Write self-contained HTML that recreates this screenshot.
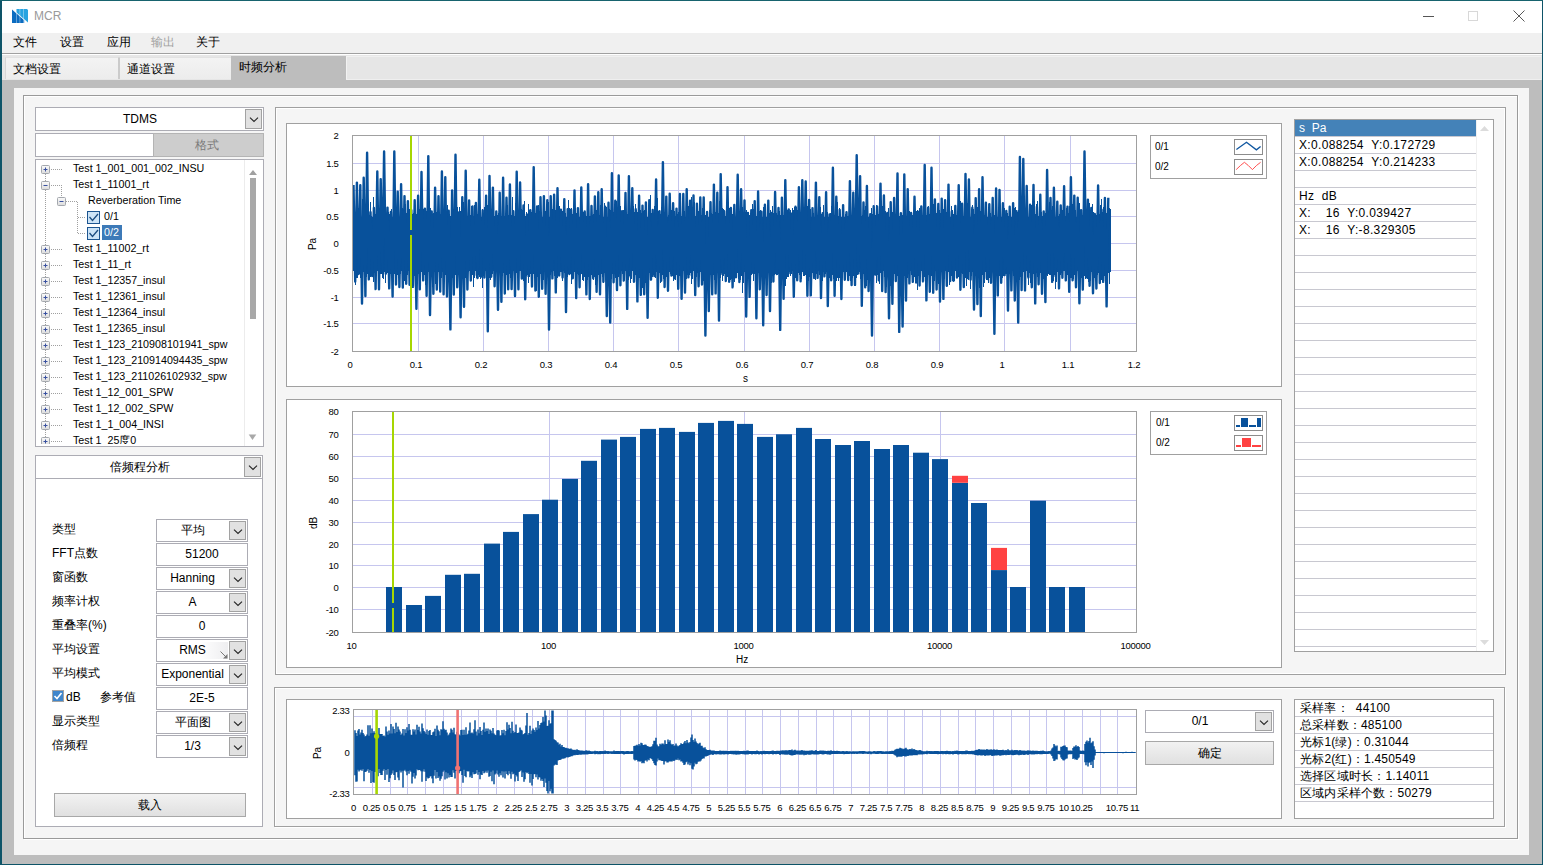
<!DOCTYPE html>
<html><head><meta charset="utf-8"><style>
html,body{margin:0;padding:0;width:1543px;height:865px;overflow:hidden;background:#0e5468;}
body{position:relative;font-family:"Liberation Sans", sans-serif;}
div{position:absolute;box-sizing:border-box;}
.t{white-space:pre;font-family:"Liberation Sans", sans-serif;}
</style></head><body>
<div class="" style="left:0px;top:0px;width:1543px;height:865px;background:#0e5468;"></div><div class="" style="left:0px;top:0px;width:1543px;height:1px;background:#17636e;"></div><div class="" style="left:2px;top:1px;width:1540px;height:863px;background:#bdbdbd;"></div><div class="" style="left:2px;top:1px;width:1540px;height:32px;background:#fff;"></div><svg style="position:absolute;left:0;top:0" width="40" height="30">
<path d="M12 9.6 L24.2 20.3 L24.2 23 L12 23 Z" fill="#0b6cc0"/>
<path d="M16.2 9 L27 9 L28 10 L28 22.6 L16.2 12.2 Z" fill="#28a3e0"/>
<rect x="16" y="9" width="0.8" height="14" fill="#fff" opacity="0.45"/>
<rect x="19.5" y="9" width="0.8" height="14" fill="#fff" opacity="0.45"/>
<rect x="23.2" y="9" width="0.8" height="14" fill="#fff" opacity="0.45"/>
</svg><div class="t" style="left:34px;top:8px;font-size:12px;color:#9a9a9a;height:16px;line-height:16px;">MCR</div><div class="" style="left:1423px;top:16px;width:11px;height:1px;background:#555;"></div><div class="" style="left:1468px;top:11px;width:10px;height:10px;border:1px solid #d8d8d8;box-sizing:border-box;"></div><svg style="position:absolute;left:1513px;top:10px" width="12" height="12"><path d="M0.5 0.5 L11.5 11.5 M11.5 0.5 L0.5 11.5" stroke="#444" stroke-width="0.9"/></svg><div class="" style="left:2px;top:33px;width:1540px;height:20px;background:#f0f0f0;"></div><div class="" style="left:2px;top:53px;width:1540px;height:1px;background:#a0a0a0;"></div><div class="t" style="left:13px;top:34px;font-size:12px;color:#000;height:16px;line-height:16px;">文件</div><div class="t" style="left:60px;top:34px;font-size:12px;color:#000;height:16px;line-height:16px;">设置</div><div class="t" style="left:107px;top:34px;font-size:12px;color:#000;height:16px;line-height:16px;">应用</div><div class="t" style="left:151px;top:34px;font-size:12px;color:#a0a0a0;height:16px;line-height:16px;">输出</div><div class="t" style="left:196px;top:34px;font-size:12px;color:#000;height:16px;line-height:16px;">关于</div><div class="" style="left:2px;top:54px;width:1540px;height:1px;background:#fff;"></div><div class="" style="left:2px;top:55px;width:1540px;height:25px;background:#e6e6e6;"></div><div class="" style="left:346px;top:56px;width:1195px;height:24px;border-left:1px solid #f2f2f2;border-top:1px solid #f0f0f0;border-bottom:1px solid #efefef;"></div><div class="" style="left:5px;top:57px;width:114px;height:22px;background:linear-gradient(#f3f3f3,#ececec);border-left:1px solid #d6d6d6;border-top:1px solid #e2e2e2;border-right:1px solid #cbcbcb;"></div><div class="" style="left:119px;top:57px;width:112px;height:22px;background:linear-gradient(#f3f3f3,#ececec);border-left:1px solid #cbcbcb;border-top:1px solid #e2e2e2;"></div><div class="" style="left:231px;top:56px;width:115px;height:24px;background:#bdbdbd;"></div><div class="t" style="left:13px;top:61px;font-size:12px;color:#000;height:16px;line-height:16px;">文档设置</div><div class="t" style="left:127px;top:61px;font-size:12px;color:#000;height:16px;line-height:16px;">通道设置</div><div class="t" style="left:239px;top:59px;font-size:12px;color:#000;height:16px;line-height:16px;">时频分析</div><div class="" style="left:14px;top:88px;width:1515px;height:767px;background:#f5f5f5;"></div><div class="" style="left:24px;top:96px;width:1495px;height:744px;border:1px solid #fff;box-sizing:border-box;"></div><div class="" style="left:23px;top:95px;width:1495px;height:744px;border:1px solid #9a9a9a;box-sizing:border-box;"></div><div class="" style="left:35px;top:107px;width:229px;height:24px;background:#fff;border:1px solid #acacb4;box-sizing:border-box;"></div><div class="" style="left:245px;top:109px;width:17px;height:20px;background:#e1e1e1;border:1px solid #a2a2a2;box-sizing:border-box;"><svg width="17" height="20" style="position:absolute;left:0;top:0"><path d="M4 7.6 L8 11.5 L12 7.6" stroke="#262626" stroke-width="1.15" fill="none"/></svg></div><div class="t" style="left:35px;top:107px;font-size:12px;color:#000;width:210px;height:24px;line-height:24px;text-align:center;">TDMS</div><div class="" style="left:35px;top:133px;width:119px;height:24px;background:#fff;border:1px solid #acacb4;border-right:none;box-sizing:border-box;"></div><div class="" style="left:153px;top:133px;width:111px;height:24px;background:#cdcdcd;border:1px solid #b4b4b4;box-sizing:border-box;"></div><div class="t" style="left:151px;top:133px;font-size:12px;color:#7a7a7a;width:111px;height:24px;line-height:24px;text-align:center;">格式</div><div class="" style="left:35px;top:159px;width:229px;height:288px;background:#fff;border:1px solid #acacb4;box-sizing:border-box;"></div><div class="" style="left:244px;top:160px;width:1px;height:286px;background:#ececec;"></div><svg style="position:absolute;left:245px;top:160px" width="18" height="286"><path d="M4 15 L8 10 L12 15 Z" fill="#a0a0a0"/><rect x="5" y="18" width="6" height="141" fill="#a8a8a8"/><path d="M3.7 274.4 L11.3 274.4 L7.5 280 Z" fill="#a8a8a8"/></svg><div class="t" style="left:73px;top:160px;font-size:10.7px;color:#000;height:16px;line-height:16px;">Test 1_001_001_002_INSU</div><div class="t" style="left:73px;top:176px;font-size:10.7px;color:#000;height:16px;line-height:16px;">Test 1_11001_rt</div><div class="t" style="left:73px;top:240px;font-size:10.7px;color:#000;height:16px;line-height:16px;">Test 1_11002_rt</div><div class="t" style="left:73px;top:256px;font-size:10.7px;color:#000;height:16px;line-height:16px;">Test 1_11_rt</div><div class="t" style="left:73px;top:272px;font-size:10.7px;color:#000;height:16px;line-height:16px;">Test 1_12357_insul</div><div class="t" style="left:73px;top:288px;font-size:10.7px;color:#000;height:16px;line-height:16px;">Test 1_12361_insul</div><div class="t" style="left:73px;top:304px;font-size:10.7px;color:#000;height:16px;line-height:16px;">Test 1_12364_insul</div><div class="t" style="left:73px;top:320px;font-size:10.7px;color:#000;height:16px;line-height:16px;">Test 1_12365_insul</div><div class="t" style="left:73px;top:336px;font-size:10.7px;color:#000;height:16px;line-height:16px;">Test 1_123_210908101941_spw</div><div class="t" style="left:73px;top:352px;font-size:10.7px;color:#000;height:16px;line-height:16px;">Test 1_123_210914094435_spw</div><div class="t" style="left:73px;top:368px;font-size:10.7px;color:#000;height:16px;line-height:16px;">Test 1_123_211026102932_spw</div><div class="t" style="left:73px;top:384px;font-size:10.7px;color:#000;height:16px;line-height:16px;">Test 1_12_001_SPW</div><div class="t" style="left:73px;top:400px;font-size:10.7px;color:#000;height:16px;line-height:16px;">Test 1_12_002_SPW</div><div class="t" style="left:73px;top:416px;font-size:10.7px;color:#000;height:16px;line-height:16px;">Test 1_1_004_INSI</div><div class="t" style="left:73px;top:432px;font-size:10.7px;color:#000;height:16px;line-height:16px;">Test 1_25度0</div><svg style="position:absolute;left:36px;top:160px" width="208" height="286"><defs><linearGradient id="eg" x1="0" y1="0" x2="0" y2="1"><stop offset="0" stop-color="#fafafa"/><stop offset="1" stop-color="#dcdcdc"/></linearGradient></defs><path d="M9.5 14 V286" stroke="#a0a0a0" stroke-dasharray="1 1" /><rect x="5.5" y="5.5" width="8" height="8" rx="1" fill="url(#eg)" stroke="#a4a8ae"/><path d="M7.5 9.5 H11.5" stroke="#3850a0"/><path d="M9.5 7.5 V11.5" stroke="#3850a0"/><path d="M15 9.5 H27" stroke="#a0a0a0" stroke-dasharray="1 1"/><rect x="5.5" y="21.5" width="8" height="8" rx="1" fill="url(#eg)" stroke="#a4a8ae"/><path d="M7.5 25.5 H11.5" stroke="#3850a0"/><path d="M15 25.5 H27" stroke="#a0a0a0" stroke-dasharray="1 1"/><rect x="5.5" y="85.5" width="8" height="8" rx="1" fill="url(#eg)" stroke="#a4a8ae"/><path d="M7.5 89.5 H11.5" stroke="#3850a0"/><path d="M9.5 87.5 V91.5" stroke="#3850a0"/><path d="M15 89.5 H27" stroke="#a0a0a0" stroke-dasharray="1 1"/><rect x="5.5" y="101.5" width="8" height="8" rx="1" fill="url(#eg)" stroke="#a4a8ae"/><path d="M7.5 105.5 H11.5" stroke="#3850a0"/><path d="M9.5 103.5 V107.5" stroke="#3850a0"/><path d="M15 105.5 H27" stroke="#a0a0a0" stroke-dasharray="1 1"/><rect x="5.5" y="117.5" width="8" height="8" rx="1" fill="url(#eg)" stroke="#a4a8ae"/><path d="M7.5 121.5 H11.5" stroke="#3850a0"/><path d="M9.5 119.5 V123.5" stroke="#3850a0"/><path d="M15 121.5 H27" stroke="#a0a0a0" stroke-dasharray="1 1"/><rect x="5.5" y="133.5" width="8" height="8" rx="1" fill="url(#eg)" stroke="#a4a8ae"/><path d="M7.5 137.5 H11.5" stroke="#3850a0"/><path d="M9.5 135.5 V139.5" stroke="#3850a0"/><path d="M15 137.5 H27" stroke="#a0a0a0" stroke-dasharray="1 1"/><rect x="5.5" y="149.5" width="8" height="8" rx="1" fill="url(#eg)" stroke="#a4a8ae"/><path d="M7.5 153.5 H11.5" stroke="#3850a0"/><path d="M9.5 151.5 V155.5" stroke="#3850a0"/><path d="M15 153.5 H27" stroke="#a0a0a0" stroke-dasharray="1 1"/><rect x="5.5" y="165.5" width="8" height="8" rx="1" fill="url(#eg)" stroke="#a4a8ae"/><path d="M7.5 169.5 H11.5" stroke="#3850a0"/><path d="M9.5 167.5 V171.5" stroke="#3850a0"/><path d="M15 169.5 H27" stroke="#a0a0a0" stroke-dasharray="1 1"/><rect x="5.5" y="181.5" width="8" height="8" rx="1" fill="url(#eg)" stroke="#a4a8ae"/><path d="M7.5 185.5 H11.5" stroke="#3850a0"/><path d="M9.5 183.5 V187.5" stroke="#3850a0"/><path d="M15 185.5 H27" stroke="#a0a0a0" stroke-dasharray="1 1"/><rect x="5.5" y="197.5" width="8" height="8" rx="1" fill="url(#eg)" stroke="#a4a8ae"/><path d="M7.5 201.5 H11.5" stroke="#3850a0"/><path d="M9.5 199.5 V203.5" stroke="#3850a0"/><path d="M15 201.5 H27" stroke="#a0a0a0" stroke-dasharray="1 1"/><rect x="5.5" y="213.5" width="8" height="8" rx="1" fill="url(#eg)" stroke="#a4a8ae"/><path d="M7.5 217.5 H11.5" stroke="#3850a0"/><path d="M9.5 215.5 V219.5" stroke="#3850a0"/><path d="M15 217.5 H27" stroke="#a0a0a0" stroke-dasharray="1 1"/><rect x="5.5" y="229.5" width="8" height="8" rx="1" fill="url(#eg)" stroke="#a4a8ae"/><path d="M7.5 233.5 H11.5" stroke="#3850a0"/><path d="M9.5 231.5 V235.5" stroke="#3850a0"/><path d="M15 233.5 H27" stroke="#a0a0a0" stroke-dasharray="1 1"/><rect x="5.5" y="245.5" width="8" height="8" rx="1" fill="url(#eg)" stroke="#a4a8ae"/><path d="M7.5 249.5 H11.5" stroke="#3850a0"/><path d="M9.5 247.5 V251.5" stroke="#3850a0"/><path d="M15 249.5 H27" stroke="#a0a0a0" stroke-dasharray="1 1"/><rect x="5.5" y="261.5" width="8" height="8" rx="1" fill="url(#eg)" stroke="#a4a8ae"/><path d="M7.5 265.5 H11.5" stroke="#3850a0"/><path d="M9.5 263.5 V267.5" stroke="#3850a0"/><path d="M15 265.5 H27" stroke="#a0a0a0" stroke-dasharray="1 1"/><rect x="5.5" y="277.5" width="8" height="8" rx="1" fill="url(#eg)" stroke="#a4a8ae"/><path d="M7.5 281.5 H11.5" stroke="#3850a0"/><path d="M9.5 279.5 V283.5" stroke="#3850a0"/><path d="M15 281.5 H27" stroke="#a0a0a0" stroke-dasharray="1 1"/><path d="M25.5 25 V37" stroke="#a0a0a0" stroke-dasharray="1 1"/><rect x="21.5" y="37.5" width="8" height="8" rx="1" fill="url(#eg)" stroke="#a4a8ae"/><path d="M23.5 41.5 H27.5" stroke="#3850a0"/><path d="M30 41.5 H42" stroke="#a0a0a0" stroke-dasharray="1 1"/><path d="M41.5 42 V73" stroke="#a0a0a0" stroke-dasharray="1 1"/><path d="M42 57.5 H50 M42 73.5 H50" stroke="#a0a0a0" stroke-dasharray="1 1"/><rect x="51.5" y="51.5" width="12" height="12" fill="#cde4f7" stroke="#1c5590"/><path d="M53.5 57 L56.5 60.5 L62 54" stroke="#1c4d80" stroke-width="1.3" fill="none"/><rect x="51.5" y="67.5" width="12" height="12" fill="#cde4f7" stroke="#1c5590"/><path d="M53.5 73 L56.5 76.5 L62 70" stroke="#1c4d80" stroke-width="1.3" fill="none"/></svg><div class="" style="left:36px;top:444px;width:208px;height:2px;background:#fff;"></div><div class="" style="left:35px;top:446px;width:229px;height:8px;background:#f5f5f5;border-top:1px solid #acacb4;"></div><div class="t" style="left:88px;top:192px;font-size:10.7px;color:#000;height:16px;line-height:16px;">Reverberation Time</div><div class="t" style="left:104px;top:208px;font-size:10.7px;color:#000;height:16px;line-height:16px;">0/1</div><div class="" style="left:102px;top:225px;width:20px;height:15px;background:#3d7ab8;"></div><div class="t" style="left:104px;top:224px;font-size:10.7px;color:#fff;height:16px;line-height:16px;">0/2</div><div class="" style="left:35px;top:455px;width:228px;height:24px;background:#fff;border:1px solid #acacb4;box-sizing:border-box;"></div><div class="" style="left:244px;top:457px;width:17px;height:20px;background:#e1e1e1;border:1px solid #a2a2a2;box-sizing:border-box;"><svg width="17" height="20" style="position:absolute;left:0;top:0"><path d="M4 7.6 L8 11.5 L12 7.6" stroke="#262626" stroke-width="1.15" fill="none"/></svg></div><div class="t" style="left:35px;top:455px;font-size:12px;color:#000;width:209px;height:24px;line-height:24px;text-align:center;">倍频程分析</div><div class="" style="left:35px;top:478px;width:228px;height:349px;border:1px solid #acacb4;box-sizing:border-box;background:#fff;"></div><div class="t" style="left:52px;top:517.5px;font-size:12px;color:#000;height:22px;line-height:22px;">类型</div><div class="" style="left:156px;top:519px;width:92px;height:23px;background:#fff;border:1px solid #acacb4;box-sizing:border-box;"></div><div class="" style="left:229px;top:521px;width:17px;height:19px;background:#e1e1e1;border:1px solid #a2a2a2;box-sizing:border-box;"><svg width="17" height="19" style="position:absolute;left:0;top:0"><path d="M4 7.6 L8 11.5 L12 7.6" stroke="#262626" stroke-width="1.15" fill="none"/></svg></div><div class="t" style="left:156px;top:519px;font-size:12px;color:#000;width:73px;height:23px;line-height:23px;text-align:center;">平均</div><div class="t" style="left:52px;top:541.5px;font-size:12px;color:#000;height:22px;line-height:22px;">FFT点数</div><div class="" style="left:156px;top:543px;width:92px;height:23px;background:#fff;border:1px solid #acacb4;box-sizing:border-box;"></div><div class="t" style="left:156px;top:543px;font-size:12px;color:#000;width:92px;height:23px;line-height:23px;text-align:center;">51200</div><div class="t" style="left:52px;top:565.5px;font-size:12px;color:#000;height:22px;line-height:22px;">窗函数</div><div class="" style="left:156px;top:567px;width:92px;height:23px;background:#fff;border:1px solid #acacb4;box-sizing:border-box;"></div><div class="" style="left:229px;top:569px;width:17px;height:19px;background:#e1e1e1;border:1px solid #a2a2a2;box-sizing:border-box;"><svg width="17" height="19" style="position:absolute;left:0;top:0"><path d="M4 7.6 L8 11.5 L12 7.6" stroke="#262626" stroke-width="1.15" fill="none"/></svg></div><div class="t" style="left:156px;top:567px;font-size:12px;color:#000;width:73px;height:23px;line-height:23px;text-align:center;">Hanning</div><div class="t" style="left:52px;top:589.5px;font-size:12px;color:#000;height:22px;line-height:22px;">频率计权</div><div class="" style="left:156px;top:591px;width:92px;height:23px;background:#fff;border:1px solid #acacb4;box-sizing:border-box;"></div><div class="" style="left:229px;top:593px;width:17px;height:19px;background:#e1e1e1;border:1px solid #a2a2a2;box-sizing:border-box;"><svg width="17" height="19" style="position:absolute;left:0;top:0"><path d="M4 7.6 L8 11.5 L12 7.6" stroke="#262626" stroke-width="1.15" fill="none"/></svg></div><div class="t" style="left:156px;top:591px;font-size:12px;color:#000;width:73px;height:23px;line-height:23px;text-align:center;">A</div><div class="t" style="left:52px;top:613.5px;font-size:12px;color:#000;height:22px;line-height:22px;">重叠率(%)</div><div class="" style="left:156px;top:615px;width:92px;height:23px;background:#fff;border:1px solid #acacb4;box-sizing:border-box;"></div><div class="t" style="left:156px;top:615px;font-size:12px;color:#000;width:92px;height:23px;line-height:23px;text-align:center;">0</div><div class="t" style="left:52px;top:637.5px;font-size:12px;color:#000;height:22px;line-height:22px;">平均设置</div><div class="" style="left:156px;top:639px;width:92px;height:23px;background:#fff;border:1px solid #acacb4;box-sizing:border-box;"></div><div class="" style="left:229px;top:641px;width:17px;height:19px;background:#e1e1e1;border:1px solid #a2a2a2;box-sizing:border-box;"><svg width="17" height="19" style="position:absolute;left:0;top:0"><path d="M4 7.6 L8 11.5 L12 7.6" stroke="#262626" stroke-width="1.15" fill="none"/></svg></div><div class="t" style="left:156px;top:639px;font-size:12px;color:#000;width:73px;height:23px;line-height:23px;text-align:center;"></div><div class="t" style="left:52px;top:661.5px;font-size:12px;color:#000;height:22px;line-height:22px;">平均模式</div><div class="" style="left:156px;top:663px;width:92px;height:23px;background:#fff;border:1px solid #acacb4;box-sizing:border-box;"></div><div class="" style="left:229px;top:665px;width:17px;height:19px;background:#e1e1e1;border:1px solid #a2a2a2;box-sizing:border-box;"><svg width="17" height="19" style="position:absolute;left:0;top:0"><path d="M4 7.6 L8 11.5 L12 7.6" stroke="#262626" stroke-width="1.15" fill="none"/></svg></div><div class="t" style="left:156px;top:663px;font-size:12px;color:#000;width:73px;height:23px;line-height:23px;text-align:center;">Exponential</div><div class="" style="left:156px;top:687px;width:92px;height:23px;background:#fff;border:1px solid #acacb4;box-sizing:border-box;"></div><div class="t" style="left:156px;top:687px;font-size:12px;color:#000;width:92px;height:23px;line-height:23px;text-align:center;">2E-5</div><div class="t" style="left:52px;top:709.5px;font-size:12px;color:#000;height:22px;line-height:22px;">显示类型</div><div class="" style="left:156px;top:711px;width:92px;height:23px;background:#fff;border:1px solid #acacb4;box-sizing:border-box;"></div><div class="" style="left:229px;top:713px;width:17px;height:19px;background:#e1e1e1;border:1px solid #a2a2a2;box-sizing:border-box;"><svg width="17" height="19" style="position:absolute;left:0;top:0"><path d="M4 7.6 L8 11.5 L12 7.6" stroke="#262626" stroke-width="1.15" fill="none"/></svg></div><div class="t" style="left:156px;top:711px;font-size:12px;color:#000;width:73px;height:23px;line-height:23px;text-align:center;">平面图</div><div class="t" style="left:52px;top:733.5px;font-size:12px;color:#000;height:22px;line-height:22px;">倍频程</div><div class="" style="left:156px;top:735px;width:92px;height:23px;background:#fff;border:1px solid #acacb4;box-sizing:border-box;"></div><div class="" style="left:229px;top:737px;width:17px;height:19px;background:#e1e1e1;border:1px solid #a2a2a2;box-sizing:border-box;"><svg width="17" height="19" style="position:absolute;left:0;top:0"><path d="M4 7.6 L8 11.5 L12 7.6" stroke="#262626" stroke-width="1.15" fill="none"/></svg></div><div class="t" style="left:156px;top:735px;font-size:12px;color:#000;width:73px;height:23px;line-height:23px;text-align:center;">1/3</div><div class="" style="left:52px;top:690px;width:12px;height:12px;background:#3f86cc;border:1px solid #a4a4a4;box-sizing:border-box;"><svg width="12" height="12" style="position:absolute;left:-1px;top:-1px"><path d="M2.5 6 L5 8.5 L9.5 3" stroke="#fff" stroke-width="1.6" fill="none"/></svg></div><div class="t" style="left:66px;top:685.5px;font-size:12px;color:#000;height:22px;line-height:22px;">dB</div><div class="t" style="left:100px;top:685.5px;font-size:12px;color:#000;height:22px;line-height:22px;">参考值</div><div class="" style="left:200px;top:642px;width:28px;height:17px;background:linear-gradient(90deg,rgba(238,238,240,0),#eeeef0);"></div><div class="t" style="left:156px;top:639px;font-size:12px;color:#000;width:73px;height:23px;line-height:23px;text-align:center;">RMS</div><svg style="position:absolute;left:219px;top:650px" width="10" height="10"><path d="M1.5 1.5 L7 7" stroke="#777" stroke-width="1"/><path d="M8.5 4 L8.5 8.5 L4 8.5 Z" fill="#777"/></svg><div class="" style="left:54px;top:793px;width:192px;height:24px;background:linear-gradient(#f2f2f2,#e0e0e0);border:1px solid #a8a8a8;box-sizing:border-box;"></div><div class="t" style="left:54px;top:793px;font-size:12px;color:#000;width:192px;height:24px;line-height:24px;text-align:center;">载入</div><div class="" style="left:276px;top:108px;width:1229px;height:566px;border:1px solid #fff;box-sizing:border-box;"></div><div class="" style="left:275px;top:107px;width:1231px;height:568px;border:1px solid #a0a0a0;box-sizing:border-box;"></div><div class="" style="left:286px;top:123px;width:996px;height:264px;background:#fff;border:1px solid #a0a0a0;box-sizing:border-box;"></div><div class="" style="left:286px;top:399px;width:996px;height:269px;background:#fff;border:1px solid #a0a0a0;box-sizing:border-box;"></div><div class="" style="left:275px;top:688px;width:1231px;height:140px;border:1px solid #fff;box-sizing:border-box;"></div><div class="" style="left:274px;top:687px;width:1231px;height:140px;border:1px solid #a0a0a0;box-sizing:border-box;"></div><div class="" style="left:286px;top:699px;width:996px;height:120px;background:#fff;border:1px solid #a0a0a0;box-sizing:border-box;"></div><svg style="position:absolute;left:0;top:0" width="1543" height="865"><rect x="353" y="163" width="783" height="1" fill="#c6c6ee"/><rect x="353" y="190" width="783" height="1" fill="#c6c6ee"/><rect x="353" y="216" width="783" height="1" fill="#c6c6ee"/><rect x="353" y="243" width="783" height="1" fill="#c6c6ee"/><rect x="353" y="270" width="783" height="1" fill="#c6c6ee"/><rect x="353" y="297" width="783" height="1" fill="#c6c6ee"/><rect x="353" y="323" width="783" height="1" fill="#c6c6ee"/><rect x="418" y="136" width="1" height="215" fill="#c6c6ee"/><rect x="483" y="136" width="1" height="215" fill="#c6c6ee"/><rect x="548" y="136" width="1" height="215" fill="#c6c6ee"/><rect x="613" y="136" width="1" height="215" fill="#c6c6ee"/><rect x="678" y="136" width="1" height="215" fill="#c6c6ee"/><rect x="744" y="136" width="1" height="215" fill="#c6c6ee"/><rect x="809" y="136" width="1" height="215" fill="#c6c6ee"/><rect x="874" y="136" width="1" height="215" fill="#c6c6ee"/><rect x="939" y="136" width="1" height="215" fill="#c6c6ee"/><rect x="1004" y="136" width="1" height="215" fill="#c6c6ee"/><rect x="1070" y="136" width="1" height="215" fill="#c6c6ee"/><path d="M353.5 209V271M354.5 213V276M355.5 212V285M356.5 211V278M357.5 214V278M358.5 208V273M359.5 211V274M360.5 211V278M361.5 217V277M362.5 199V273M363.5 208V272M364.5 217V274M365.5 212V272M366.5 215V277M367.5 212V274M368.5 205V274M369.5 215V272M370.5 202V277M371.5 216V274M372.5 217V275M373.5 197V282M374.5 216V273M375.5 214V280M376.5 214V271M377.5 215V271M378.5 208V273M379.5 212V276M380.5 215V274M381.5 217V274M382.5 217V278M383.5 213V279M384.5 214V272M385.5 202V283M386.5 217V273M387.5 215V273M388.5 212V275M389.5 214V282M390.5 212V274M391.5 209V272M392.5 217V279M393.5 199V280M394.5 214V274M395.5 208V271M396.5 211V281M397.5 211V275M398.5 217V274M399.5 217V277M400.5 212V274M401.5 210V271M402.5 208V275M403.5 209V281M404.5 215V281M405.5 204V277M406.5 213V279M407.5 212V275M408.5 207V271M409.5 209V284M410.5 217V275M411.5 212V279M412.5 214V278M413.5 213V278M414.5 216V276M415.5 214V281M416.5 214V280M417.5 211V280M418.5 211V274M419.5 209V274M420.5 216V278M421.5 215V272M422.5 216V273M423.5 209V271M424.5 212V275M425.5 214V285M426.5 211V281M427.5 215V275M428.5 212V272M429.5 213V271M430.5 208V273M431.5 216V271M432.5 214V287M433.5 213V276M434.5 217V272M435.5 212V284M436.5 212V273M437.5 211V276M438.5 210V272M439.5 217V275M440.5 214V287M441.5 217V278M442.5 216V272M443.5 212V284M444.5 211V275M445.5 205V275M446.5 211V277M447.5 205V275M448.5 217V274M449.5 214V272M450.5 216V279M451.5 211V276M452.5 204V278M453.5 209V278M454.5 209V278M455.5 215V275M456.5 215V274M457.5 207V272M458.5 213V271M459.5 207V272M460.5 211V278M461.5 205V275M462.5 215V276M463.5 202V273M464.5 213V272M465.5 215V278M466.5 217V279M467.5 216V280M468.5 215V272M469.5 212V271M470.5 215V273M471.5 206V271M472.5 212V275M473.5 216V287M474.5 205V278M475.5 216V271M476.5 211V278M477.5 214V274M478.5 209V275M479.5 212V277M480.5 207V279M481.5 217V276M482.5 209V288M483.5 215V276M484.5 207V275M485.5 209V271M486.5 210V272M487.5 205V272M488.5 213V275M489.5 217V278M490.5 214V280M491.5 215V273M492.5 209V274M493.5 214V271M494.5 216V278M495.5 217V276M496.5 216V271M497.5 215V278M498.5 213V282M499.5 214V271M500.5 214V271M501.5 216V274M502.5 209V276M503.5 217V273M504.5 216V272M505.5 214V271M506.5 213V275M507.5 205V271M508.5 215V276M509.5 214V274M510.5 199V278M511.5 215V272M512.5 197V275M513.5 211V271M514.5 216V271M515.5 203V275M516.5 212V273M517.5 210V272M518.5 217V282M519.5 217V271M520.5 212V271M521.5 209V271M522.5 210V277M523.5 215V281M524.5 201V272M525.5 216V279M526.5 212V276M527.5 215V275M528.5 204V283M529.5 210V277M530.5 216V274M531.5 212V271M532.5 213V273M533.5 214V274M534.5 216V272M535.5 213V276M536.5 216V291M537.5 210V277M538.5 205V272M539.5 211V280M540.5 213V274M541.5 213V275M542.5 217V271M543.5 211V280M544.5 212V271M545.5 211V280M546.5 204V278M547.5 208V273M548.5 202V277M549.5 217V273M550.5 216V275M551.5 213V272M552.5 209V277M553.5 215V271M554.5 215V276M555.5 210V276M556.5 216V278M557.5 213V278M558.5 209V271M559.5 206V272M560.5 214V272M561.5 212V272M562.5 211V281M563.5 208V271M564.5 212V273M565.5 213V272M566.5 217V277M567.5 211V277M568.5 200V274M569.5 208V275M570.5 215V274M571.5 208V284M572.5 214V271M573.5 208V277M574.5 214V272M575.5 216V275M576.5 213V276M577.5 217V274M578.5 212V275M579.5 217V273M580.5 213V276M581.5 214V274M582.5 216V280M583.5 212V281M584.5 214V277M585.5 216V272M586.5 216V272M587.5 216V280M588.5 217V277M589.5 216V271M590.5 216V279M591.5 205V275M592.5 215V273M593.5 214V280M594.5 216V277M595.5 216V285M596.5 210V272M597.5 208V276M598.5 213V275M599.5 215V277M600.5 205V282M601.5 207V274M602.5 217V277M603.5 217V283M604.5 203V273M605.5 214V272M606.5 207V271M607.5 217V277M608.5 216V271M609.5 209V276M610.5 210V277M611.5 211V279M612.5 201V274M613.5 212V275M614.5 214V273M615.5 207V278M616.5 201V272M617.5 214V276M618.5 212V277M619.5 215V273M620.5 206V276M621.5 216V271M622.5 211V274M623.5 210V272M624.5 216V273M625.5 216V271M626.5 214V282M627.5 214V275M628.5 217V280M629.5 207V276M630.5 216V283M631.5 217V279M632.5 211V271M633.5 206V273M634.5 212V271M635.5 204V275M636.5 210V280M637.5 212V280M638.5 208V272M639.5 214V278M640.5 210V271M641.5 213V280M642.5 217V288M643.5 211V278M644.5 210V279M645.5 213V283M646.5 208V273M647.5 217V271M648.5 214V276M649.5 216V273M650.5 195V275M651.5 213V279M652.5 216V277M653.5 217V275M654.5 206V274M655.5 213V278M656.5 211V272M657.5 198V279M658.5 211V283M659.5 214V273M660.5 214V283M661.5 207V271M662.5 209V275M663.5 213V279M664.5 216V277M665.5 210V271M666.5 213V277M667.5 217V271M668.5 215V284M669.5 212V272M670.5 215V274M671.5 210V275M672.5 217V276M673.5 212V281M674.5 211V272M675.5 216V280M676.5 214V275M677.5 214V283M678.5 212V278M679.5 217V276M680.5 208V271M681.5 216V272M682.5 214V276M683.5 215V271M684.5 211V272M685.5 217V275M686.5 200V279M687.5 217V275M688.5 206V271M689.5 210V275M690.5 205V273M691.5 197V284M692.5 207V279M693.5 211V271M694.5 202V280M695.5 216V271M696.5 211V277M697.5 210V273M698.5 211V275M699.5 213V273M700.5 203V272M701.5 215V276M702.5 208V273M703.5 206V281M704.5 214V272M705.5 215V275M706.5 212V271M707.5 217V278M708.5 217V274M709.5 210V275M710.5 216V275M711.5 213V271M712.5 214V278M713.5 217V275M714.5 216V280M715.5 212V273M716.5 212V278M717.5 202V272M718.5 213V284M719.5 201V276M720.5 210V278M721.5 211V273M722.5 208V281M723.5 209V276M724.5 211V274M725.5 216V276M726.5 208V280M727.5 214V277M728.5 214V272M729.5 208V278M730.5 214V280M731.5 216V279M732.5 214V284M733.5 208V275M734.5 211V282M735.5 217V275M736.5 207V278M737.5 217V273M738.5 215V279M739.5 217V272M740.5 204V280M741.5 204V276M742.5 207V293M743.5 216V283M744.5 212V272M745.5 212V273M746.5 210V284M747.5 214V272M748.5 212V272M749.5 215V282M750.5 213V276M751.5 217V275M752.5 204V272M753.5 209V281M754.5 211V274M755.5 212V272M756.5 216V278M757.5 206V272M758.5 214V273M759.5 211V276M760.5 210V273M761.5 216V275M762.5 217V280M763.5 207V271M764.5 213V274M765.5 211V277M766.5 217V274M767.5 208V272M768.5 208V272M769.5 213V278M770.5 210V274M771.5 217V283M772.5 206V276M773.5 213V278M774.5 196V275M775.5 207V274M776.5 213V274M777.5 215V275M778.5 212V274M779.5 211V279M780.5 215V277M781.5 215V272M782.5 213V276M783.5 215V275M784.5 213V277M785.5 209V286M786.5 213V279M787.5 210V277M788.5 213V277M789.5 215V272M790.5 210V276M791.5 216V274M792.5 208V271M793.5 210V281M794.5 207V271M795.5 210V278M796.5 207V276M797.5 210V274M798.5 217V273M799.5 216V275M800.5 212V272M801.5 207V279M802.5 205V272M803.5 217V276M804.5 212V276M805.5 212V275M806.5 208V285M807.5 206V292M808.5 214V281M809.5 209V277M810.5 209V273M811.5 217V277M812.5 216V273M813.5 213V275M814.5 217V273M815.5 215V280M816.5 210V274M817.5 215V276M818.5 210V271M819.5 212V275M820.5 207V271M821.5 214V272M822.5 217V281M823.5 205V272M824.5 217V276M825.5 211V274M826.5 217V272M827.5 212V274M828.5 217V274M829.5 216V278M830.5 213V274M831.5 206V271M832.5 210V275M833.5 216V279M834.5 215V284M835.5 214V281M836.5 209V281M837.5 202V278M838.5 216V281M839.5 208V278M840.5 216V275M841.5 217V275M842.5 207V271M843.5 214V272M844.5 217V275M845.5 214V280M846.5 215V272M847.5 216V273M848.5 216V271M849.5 214V276M850.5 214V281M851.5 217V283M852.5 206V278M853.5 214V276M854.5 214V274M855.5 207V271M856.5 211V278M857.5 214V275M858.5 212V273M859.5 217V272M860.5 215V279M861.5 216V275M862.5 215V276M863.5 214V274M864.5 210V272M865.5 206V271M866.5 217V286M867.5 207V280M868.5 217V277M869.5 216V276M870.5 214V274M871.5 208V276M872.5 214V279M873.5 217V271M874.5 215V275M875.5 215V272M876.5 205V283M877.5 211V275M878.5 214V272M879.5 215V284M880.5 216V273M881.5 212V276M882.5 206V272M883.5 216V271M884.5 215V277M885.5 211V279M886.5 213V287M887.5 215V271M888.5 208V282M889.5 217V280M890.5 212V286M891.5 216V281M892.5 212V281M893.5 213V276M894.5 212V274M895.5 216V275M896.5 207V274M897.5 216V276M898.5 209V274M899.5 216V275M900.5 213V279M901.5 215V275M902.5 215V278M903.5 213V272M904.5 214V276M905.5 212V278M906.5 216V278M907.5 210V278M908.5 214V273M909.5 211V271M910.5 214V271M911.5 213V275M912.5 215V273M913.5 214V276M914.5 210V277M915.5 217V283M916.5 211V276M917.5 210V290M918.5 215V276M919.5 208V271M920.5 212V272M921.5 208V271M922.5 215V274M923.5 211V272M924.5 210V277M925.5 211V286M926.5 215V278M927.5 215V272M928.5 206V275M929.5 214V272M930.5 216V273M931.5 209V276M932.5 215V280M933.5 204V272M934.5 205V281M935.5 210V271M936.5 213V280M937.5 215V279M938.5 209V284M939.5 210V280M940.5 213V282M941.5 205V272M942.5 212V278M943.5 209V271M944.5 212V279M945.5 216V271M946.5 212V271M947.5 214V276M948.5 217V272M949.5 212V285M950.5 217V278M951.5 206V276M952.5 210V281M953.5 214V281M954.5 215V281M955.5 212V271M956.5 215V277M957.5 215V272M958.5 213V277M959.5 216V273M960.5 201V280M961.5 217V273M962.5 213V274M963.5 216V280M964.5 214V284M965.5 211V278M966.5 212V286M967.5 203V276M968.5 204V280M969.5 214V272M970.5 217V289M971.5 209V276M972.5 205V272M973.5 209V278M974.5 214V274M975.5 210V276M976.5 211V274M977.5 207V278M978.5 213V278M979.5 214V288M980.5 211V274M981.5 216V272M982.5 211V275M983.5 202V287M984.5 215V283M985.5 211V272M986.5 217V280M987.5 217V274M988.5 209V283M989.5 207V278M990.5 213V272M991.5 217V281M992.5 208V272M993.5 217V283M994.5 215V274M995.5 210V281M996.5 212V271M997.5 217V282M998.5 212V284M999.5 215V276M1000.5 214V271M1001.5 217V271M1002.5 212V278M1003.5 213V276M1004.5 208V275M1005.5 216V274M1006.5 215V274M1007.5 213V283M1008.5 216V273M1009.5 213V274M1010.5 213V276M1011.5 217V274M1012.5 214V271M1013.5 212V276M1014.5 208V276M1015.5 207V273M1016.5 217V271M1017.5 212V272M1018.5 210V277M1019.5 217V280M1020.5 205V277M1021.5 217V279M1022.5 208V272M1023.5 211V272M1024.5 211V273M1025.5 208V271M1026.5 210V271M1027.5 216V277M1028.5 217V285M1029.5 211V273M1030.5 214V283M1031.5 205V276M1032.5 215V274M1033.5 216V274M1034.5 201V272M1035.5 214V277M1036.5 204V273M1037.5 201V277M1038.5 216V275M1039.5 214V273M1040.5 216V273M1041.5 212V276M1042.5 216V272M1043.5 214V279M1044.5 216V281M1045.5 213V287M1046.5 215V275M1047.5 215V276M1048.5 215V272M1049.5 202V275M1050.5 217V275M1051.5 210V274M1052.5 206V278M1053.5 216V281M1054.5 209V275M1055.5 217V289M1056.5 211V282M1057.5 216V272M1058.5 216V273M1059.5 214V271M1060.5 213V275M1061.5 217V273M1062.5 210V275M1063.5 211V271M1064.5 216V271M1065.5 216V271M1066.5 208V276M1067.5 212V275M1068.5 213V280M1069.5 206V277M1070.5 214V278M1071.5 216V278M1072.5 204V272M1073.5 201V279M1074.5 206V275M1075.5 210V276M1076.5 217V276M1077.5 208V271M1078.5 208V280M1079.5 203V271M1080.5 214V273M1081.5 212V278M1082.5 215V278M1083.5 214V271M1084.5 217V276M1085.5 217V279M1086.5 213V273M1087.5 217V279M1088.5 217V282M1089.5 203V272M1090.5 210V281M1091.5 211V272M1092.5 204V272M1093.5 212V277M1094.5 213V278M1095.5 214V278M1096.5 215V276M1097.5 217V275M1098.5 211V273M1099.5 214V273M1100.5 205V277M1101.5 199V280M1102.5 212V274M1103.5 207V275M1104.5 206V276M1105.5 206V272M1106.5 213V272M1107.5 217V277M1108.5 217V273M1109.5 208V284M1110.5 209V272" stroke="#08519b" stroke-width="1" fill="none"/><path d="M353.5 185.1L355.2 281.6L356.9 182.6L358.6 274.1L360.3 185.3L362.0 303.5L363.7 177.7L365.4 296.1L367.1 152.8L368.8 279.4L370.5 212.2L372.2 276.0L373.9 207.9L375.6 289.1L377.3 171.5L379.0 289.3L380.7 179.1L382.4 272.6L384.1 151.5L385.8 273.7L387.5 207.6L389.2 288.4L390.9 212.0L392.6 296.6L394.3 151.5L396.0 284.6L397.7 191.6L399.4 287.0L401.1 184.2L402.8 287.5L404.5 196.1L406.2 283.7L407.9 201.2L409.6 284.7L411.3 210.1L413.0 286.9L414.7 200.3L416.4 308.8L418.1 195.8L419.8 289.3L421.5 171.9L423.2 280.4L424.9 208.6L426.6 295.8L428.3 156.1L430.0 315.1L431.7 211.5L433.4 293.7L435.1 187.7L436.8 289.5L438.5 196.2L440.2 291.5L441.9 171.5L443.6 294.3L445.3 177.3L447.0 296.6L448.7 210.7L450.4 329.4L452.1 190.4L453.8 294.5L455.5 154.8L457.2 287.3L458.9 212.5L460.6 317.2L462.3 197.2L464.0 306.7L465.7 170.8L467.4 289.6L469.1 200.4L470.8 280.5L472.5 206.5L474.2 275.3L475.9 203.0L477.6 278.1L479.3 179.7L481.0 276.8L482.7 210.4L484.4 277.5L486.1 195.8L487.8 331.2L489.5 175.9L491.2 276.8L492.9 187.6L494.6 286.2L496.3 211.5L498.0 309.8L499.7 192.7L501.4 301.8L503.1 177.7L504.8 293.6L506.5 197.8L508.2 289.2L509.9 184.5L511.6 289.1L513.3 211.3L515.0 296.1L516.7 171.8L518.4 289.2L520.1 182.5L521.8 278.6L523.5 205.5L525.2 299.2L526.9 214.4L528.6 276.1L530.3 210.2L532.0 286.5L533.7 167.2L535.4 290.6L537.1 206.4L538.8 296.7L540.5 197.2L542.2 288.7L543.9 196.1L545.6 293.7L547.3 200.3L549.0 329.5L550.7 196.2L552.4 278.4L554.1 194.8L555.8 292.4L557.5 188.3L559.2 275.5L560.9 209.6L562.6 277.5L564.3 199.1L566.0 312.1L567.7 209.3L569.4 274.0L571.1 209.8L572.8 278.3L574.5 190.5L576.2 298.0L577.9 208.1L579.6 287.2L581.3 187.4L583.0 274.3L584.7 211.4L586.4 294.4L588.1 184.2L589.8 299.1L591.5 206.0L593.2 278.2L594.9 196.4L596.6 291.7L598.3 192.2L600.0 294.3L601.7 189.3L603.4 281.7L605.1 206.7L606.8 316.1L608.5 202.7L610.2 322.6L611.9 173.2L613.6 282.3L615.3 200.8L617.0 290.0L618.7 175.5L620.4 285.3L622.1 211.3L623.8 280.6L625.5 193.0L627.2 308.9L628.9 176.2L630.6 276.5L632.3 188.2L634.0 281.8L635.7 209.3L637.4 301.4L639.1 195.7L640.8 294.9L642.5 205.6L644.2 294.3L645.9 202.4L647.6 317.7L649.3 200.1L651.0 279.6L652.7 210.0L654.4 276.0L656.1 179.5L657.8 297.7L659.5 211.3L661.2 280.8L662.9 162.1L664.6 287.1L666.3 196.6L668.0 290.8L669.7 193.8L671.4 275.6L673.1 203.2L674.8 278.2L676.5 208.6L678.2 288.7L679.9 194.0L681.6 298.8L683.3 193.9L685.0 292.5L686.7 189.2L688.4 277.4L690.1 200.6L691.8 275.1L693.5 195.5L695.2 295.0L696.9 203.6L698.6 286.2L700.3 197.4L702.0 284.5L703.7 197.4L705.4 335.5L707.1 211.9L708.8 311.1L710.5 202.1L712.2 294.3L713.9 184.6L715.6 293.4L717.3 192.7L719.0 320.6L720.7 174.1L722.4 273.9L724.1 211.1L725.8 281.0L727.5 187.1L729.2 281.7L730.9 208.0L732.6 287.4L734.3 204.9L736.0 277.3L737.7 174.8L739.4 282.1L741.1 189.2L742.8 274.9L744.5 200.5L746.2 316.6L747.9 212.9L749.6 296.9L751.3 210.3L753.0 272.8L754.7 201.1L756.4 318.2L758.1 191.5L759.8 289.2L761.5 211.8L763.2 325.3L764.9 204.8L766.6 295.0L768.3 200.6L770.0 311.0L771.7 212.9L773.4 281.5L775.1 192.0L776.8 274.0L778.5 208.0L780.2 329.9L781.9 197.8L783.6 298.8L785.3 180.1L787.0 272.5L788.7 209.4L790.4 273.1L792.1 213.5L793.8 296.8L795.5 206.7L797.2 280.2L798.9 187.3L800.6 281.3L802.3 180.3L804.0 273.6L805.7 181.4L807.4 295.8L809.1 200.0L810.8 295.4L812.5 208.1L814.2 277.9L815.9 182.6L817.6 277.9L819.3 197.2L821.0 298.0L822.7 213.3L824.4 276.4L826.1 192.2L827.8 306.0L829.5 214.4L831.2 280.2L832.9 167.8L834.6 295.7L836.3 196.8L838.0 275.5L839.7 209.9L841.4 299.1L843.1 205.1L844.8 279.7L846.5 212.2L848.2 280.0L849.9 181.1L851.6 285.0L853.3 192.7L855.0 284.9L856.7 155.2L858.4 273.4L860.1 176.2L861.8 305.8L863.5 202.4L865.2 287.3L866.9 186.0L868.6 291.0L870.3 214.1L872.0 335.5L873.7 206.3L875.4 274.6L877.1 206.5L878.8 280.3L880.5 183.6L882.2 291.1L883.9 195.4L885.6 292.1L887.3 213.0L889.0 318.3L890.7 202.3L892.4 303.8L894.1 198.0L895.8 281.0L897.5 173.4L899.2 331.9L900.9 213.2L902.6 326.5L904.3 174.4L906.0 300.5L907.7 189.1L909.4 283.4L911.1 213.0L912.8 281.9L914.5 196.7L916.2 282.5L917.9 211.8L919.6 285.5L921.3 206.5L923.0 281.4L924.7 164.9L926.4 300.4L928.1 207.8L929.8 291.8L931.5 167.8L933.2 292.8L934.9 199.4L936.6 289.6L938.3 204.0L940.0 301.6L941.7 198.6L943.4 298.9L945.1 200.2L946.8 285.8L948.5 184.6L950.2 281.0L951.9 211.6L953.6 280.7L955.3 205.9L957.0 277.5L958.7 185.2L960.4 289.8L962.1 203.8L963.8 287.0L965.5 174.0L967.2 278.0L968.9 179.4L970.6 279.6L972.3 207.7L974.0 309.5L975.7 198.1L977.4 304.1L979.1 189.2L980.8 316.0L982.5 177.2L984.2 278.1L985.9 202.7L987.6 279.0L989.3 204.2L991.0 282.7L992.7 197.9L994.4 333.8L996.1 188.5L997.8 295.4L999.5 189.9L1001.2 282.7L1002.9 203.3L1004.6 275.1L1006.3 211.0L1008.0 310.5L1009.7 206.8L1011.4 290.4L1013.1 203.1L1014.8 300.5L1016.5 211.2L1018.2 322.6L1019.9 156.9L1021.6 290.1L1023.3 159.0L1025.0 290.4L1026.7 186.0L1028.4 277.5L1030.1 204.8L1031.8 287.3L1033.5 184.9L1035.2 303.4L1036.9 206.8L1038.6 284.2L1040.3 194.8L1042.0 293.7L1043.7 211.4L1045.4 302.0L1047.1 170.0L1048.8 272.9L1050.5 198.0L1052.2 281.9L1053.9 187.7L1055.6 275.9L1057.3 201.8L1059.0 288.4L1060.7 205.4L1062.4 277.7L1064.1 186.3L1065.8 280.4L1067.5 206.7L1069.2 291.7L1070.9 177.3L1072.6 280.3L1074.3 195.6L1076.0 287.3L1077.7 197.7L1079.4 303.2L1081.1 210.1L1082.8 289.6L1084.5 151.5L1086.2 277.4L1087.9 199.7L1089.6 285.7L1091.3 208.0L1093.0 293.3L1094.7 213.9L1096.4 288.5L1098.1 185.4L1099.8 283.0L1101.5 209.6L1103.2 281.9L1104.9 198.0L1106.6 306.4L1108.3 197.8" stroke="#08519b" stroke-width="2.4" stroke-linejoin="round" fill="none"/><rect x="352.5" y="135.5" width="784" height="216" fill="none" stroke="#a0a0a0"/><rect x="410" y="136" width="2" height="94" fill="#a6d602"/><rect x="410" y="235" width="2" height="116" fill="#a6d602"/><rect x="1150.5" y="135.5" width="116" height="43" fill="#fff" stroke="#a0a0a0"/><rect x="1234.5" y="139.5" width="28" height="15" fill="#fff" stroke="#8c8c8c"/><rect x="1234.5" y="159.5" width="28" height="15" fill="#fff" stroke="#8c8c8c"/><path d="M1236.4 149.5 L1246.5 142.2 L1256.4 149.8 L1260.6 146.4" stroke="#0f56a0" stroke-width="1.3" fill="none"/><path d="M1236.2 169.6 L1240.6 165.4 L1244.4 162.3 L1248.2 165.4 L1252.4 169.6 L1256.6 165.4 L1260.6 162.3" stroke="#ff3c3c" stroke-width="0.9" fill="none"/></svg><div class="t" style="left:298.5px;top:129px;font-size:9.5px;color:#000;width:40px;height:14px;line-height:14px;text-align:right;letter-spacing:-0.3px;">2</div><div class="t" style="left:298.5px;top:157px;font-size:9.5px;color:#000;width:40px;height:14px;line-height:14px;text-align:right;letter-spacing:-0.3px;">1.5</div><div class="t" style="left:298.5px;top:184px;font-size:9.5px;color:#000;width:40px;height:14px;line-height:14px;text-align:right;letter-spacing:-0.3px;">1</div><div class="t" style="left:298.5px;top:210px;font-size:9.5px;color:#000;width:40px;height:14px;line-height:14px;text-align:right;letter-spacing:-0.3px;">0.5</div><div class="t" style="left:298.5px;top:237px;font-size:9.5px;color:#000;width:40px;height:14px;line-height:14px;text-align:right;letter-spacing:-0.3px;">0</div><div class="t" style="left:298.5px;top:264px;font-size:9.5px;color:#000;width:40px;height:14px;line-height:14px;text-align:right;letter-spacing:-0.3px;">-0.5</div><div class="t" style="left:298.5px;top:291px;font-size:9.5px;color:#000;width:40px;height:14px;line-height:14px;text-align:right;letter-spacing:-0.3px;">-1</div><div class="t" style="left:298.5px;top:317px;font-size:9.5px;color:#000;width:40px;height:14px;line-height:14px;text-align:right;letter-spacing:-0.3px;">-1.5</div><div class="t" style="left:298.5px;top:345px;font-size:9.5px;color:#000;width:40px;height:14px;line-height:14px;text-align:right;letter-spacing:-0.3px;">-2</div><div class="t" style="left:330px;top:358px;font-size:9.5px;color:#000;width:40px;height:14px;line-height:14px;text-align:center;letter-spacing:-0.3px;">0</div><div class="t" style="left:396px;top:358px;font-size:9.5px;color:#000;width:40px;height:14px;line-height:14px;text-align:center;letter-spacing:-0.3px;">0.1</div><div class="t" style="left:461px;top:358px;font-size:9.5px;color:#000;width:40px;height:14px;line-height:14px;text-align:center;letter-spacing:-0.3px;">0.2</div><div class="t" style="left:526px;top:358px;font-size:9.5px;color:#000;width:40px;height:14px;line-height:14px;text-align:center;letter-spacing:-0.3px;">0.3</div><div class="t" style="left:591px;top:358px;font-size:9.5px;color:#000;width:40px;height:14px;line-height:14px;text-align:center;letter-spacing:-0.3px;">0.4</div><div class="t" style="left:656px;top:358px;font-size:9.5px;color:#000;width:40px;height:14px;line-height:14px;text-align:center;letter-spacing:-0.3px;">0.5</div><div class="t" style="left:722px;top:358px;font-size:9.5px;color:#000;width:40px;height:14px;line-height:14px;text-align:center;letter-spacing:-0.3px;">0.6</div><div class="t" style="left:787px;top:358px;font-size:9.5px;color:#000;width:40px;height:14px;line-height:14px;text-align:center;letter-spacing:-0.3px;">0.7</div><div class="t" style="left:852px;top:358px;font-size:9.5px;color:#000;width:40px;height:14px;line-height:14px;text-align:center;letter-spacing:-0.3px;">0.8</div><div class="t" style="left:917px;top:358px;font-size:9.5px;color:#000;width:40px;height:14px;line-height:14px;text-align:center;letter-spacing:-0.3px;">0.9</div><div class="t" style="left:982px;top:358px;font-size:9.5px;color:#000;width:40px;height:14px;line-height:14px;text-align:center;letter-spacing:-0.3px;">1</div><div class="t" style="left:1048px;top:358px;font-size:9.5px;color:#000;width:40px;height:14px;line-height:14px;text-align:center;letter-spacing:-0.3px;">1.1</div><div class="t" style="left:1114px;top:358px;font-size:9.5px;color:#000;width:40px;height:14px;line-height:14px;text-align:center;letter-spacing:-0.3px;">1.2</div><div class="t" style="left:307px;top:237px;font-size:10px;color:#000;height:14px;line-height:14px;transform:rotate(-90deg);">Pa</div><div class="t" style="left:743px;top:372px;font-size:10px;color:#000;height:14px;line-height:14px;">s</div><div class="t" style="left:1155px;top:140px;font-size:10px;color:#000;height:14px;line-height:14px;">0/1</div><div class="t" style="left:1155px;top:160px;font-size:10px;color:#000;height:14px;line-height:14px;">0/2</div><svg style="position:absolute;left:0;top:0" width="1543" height="865"><rect x="353" y="434" width="783" height="1" fill="#c6c6ee"/><rect x="353" y="456" width="783" height="1" fill="#c6c6ee"/><rect x="353" y="478" width="783" height="1" fill="#c6c6ee"/><rect x="353" y="500" width="783" height="1" fill="#c6c6ee"/><rect x="353" y="522" width="783" height="1" fill="#c6c6ee"/><rect x="353" y="544" width="783" height="1" fill="#c6c6ee"/><rect x="353" y="565" width="783" height="1" fill="#c6c6ee"/><rect x="353" y="587" width="783" height="1" fill="#c6c6ee"/><rect x="353" y="609" width="783" height="1" fill="#c6c6ee"/><rect x="549" y="412" width="1" height="220" fill="#c6c6ee"/><rect x="744" y="412" width="1" height="220" fill="#c6c6ee"/><rect x="940" y="412" width="1" height="220" fill="#c6c6ee"/><rect x="386" y="587.0" width="16" height="45.0" fill="#08519b"/><rect x="406" y="605.0" width="16" height="27.0" fill="#08519b"/><rect x="425" y="595.9" width="16" height="36.1" fill="#08519b"/><rect x="445" y="574.8" width="16" height="57.2" fill="#08519b"/><rect x="464" y="573.8" width="16" height="58.2" fill="#08519b"/><rect x="484" y="543.6" width="16" height="88.4" fill="#08519b"/><rect x="503" y="531.9" width="16" height="100.1" fill="#08519b"/><rect x="523" y="514.1" width="16" height="117.9" fill="#08519b"/><rect x="542" y="499.7" width="16" height="132.3" fill="#08519b"/><rect x="562" y="478.9" width="16" height="153.1" fill="#08519b"/><rect x="581" y="460.8" width="16" height="171.2" fill="#08519b"/><rect x="601" y="439.6" width="16" height="192.4" fill="#08519b"/><rect x="620" y="436.9" width="16" height="195.1" fill="#08519b"/><rect x="640" y="428.9" width="16" height="203.1" fill="#08519b"/><rect x="659" y="427.9" width="16" height="204.1" fill="#08519b"/><rect x="679" y="431.9" width="16" height="200.1" fill="#08519b"/><rect x="698" y="422.9" width="16" height="209.1" fill="#08519b"/><rect x="718" y="420.9" width="16" height="211.1" fill="#08519b"/><rect x="737" y="423.9" width="16" height="208.1" fill="#08519b"/><rect x="757" y="436.9" width="16" height="195.1" fill="#08519b"/><rect x="776" y="434.3" width="16" height="197.7" fill="#08519b"/><rect x="796" y="427.9" width="16" height="204.1" fill="#08519b"/><rect x="815" y="439.0" width="16" height="193.0" fill="#08519b"/><rect x="835" y="445.0" width="16" height="187.0" fill="#08519b"/><rect x="854" y="441.0" width="16" height="191.0" fill="#08519b"/><rect x="874" y="449.0" width="16" height="183.0" fill="#08519b"/><rect x="893" y="445.0" width="16" height="187.0" fill="#08519b"/><rect x="913" y="452.7" width="16" height="179.3" fill="#08519b"/><rect x="932" y="459.1" width="16" height="172.9" fill="#08519b"/><rect x="952" y="482.9" width="16" height="149.1" fill="#08519b"/><rect x="952" y="475.8" width="16" height="7.0" fill="#ff4242"/><rect x="971" y="503.0" width="16" height="129.0" fill="#08519b"/><rect x="991" y="570.1" width="16" height="61.9" fill="#08519b"/><rect x="991" y="547.9" width="16" height="22.1" fill="#ff4242"/><rect x="1010" y="587.0" width="16" height="45.0" fill="#08519b"/><rect x="1030" y="500.7" width="16" height="131.3" fill="#08519b"/><rect x="1049" y="587.0" width="16" height="45.0" fill="#08519b"/><rect x="1069" y="587.0" width="16" height="45.0" fill="#08519b"/><rect x="352.5" y="411.5" width="784" height="221" fill="none" stroke="#a0a0a0"/><rect x="392" y="412" width="2" height="191" fill="#a6d602"/><rect x="392" y="608" width="2" height="24" fill="#a6d602"/><rect x="1150.5" y="411.5" width="116" height="43" fill="#fff" stroke="#a0a0a0"/><rect x="1234.5" y="415.5" width="28" height="15" fill="#fff" stroke="#8c8c8c"/><rect x="1234.5" y="435.5" width="28" height="15" fill="#fff" stroke="#8c8c8c"/><path d="M1236 425h4v2h-4z M1241 418h7v9h-7z M1249 425h7v2h-7z M1257 418h4v9h-4z" fill="#08519b"/><path d="M1236 445h5v2h-5z M1242 438h9v9h-9z M1252 445h9v2h-9z" fill="#ff4242"/></svg><div class="t" style="left:298.5px;top:405px;font-size:9.5px;color:#000;width:40px;height:14px;line-height:14px;text-align:right;letter-spacing:-0.3px;">80</div><div class="t" style="left:298.5px;top:428px;font-size:9.5px;color:#000;width:40px;height:14px;line-height:14px;text-align:right;letter-spacing:-0.3px;">70</div><div class="t" style="left:298.5px;top:450px;font-size:9.5px;color:#000;width:40px;height:14px;line-height:14px;text-align:right;letter-spacing:-0.3px;">60</div><div class="t" style="left:298.5px;top:472px;font-size:9.5px;color:#000;width:40px;height:14px;line-height:14px;text-align:right;letter-spacing:-0.3px;">50</div><div class="t" style="left:298.5px;top:494px;font-size:9.5px;color:#000;width:40px;height:14px;line-height:14px;text-align:right;letter-spacing:-0.3px;">40</div><div class="t" style="left:298.5px;top:516px;font-size:9.5px;color:#000;width:40px;height:14px;line-height:14px;text-align:right;letter-spacing:-0.3px;">30</div><div class="t" style="left:298.5px;top:538px;font-size:9.5px;color:#000;width:40px;height:14px;line-height:14px;text-align:right;letter-spacing:-0.3px;">20</div><div class="t" style="left:298.5px;top:559px;font-size:9.5px;color:#000;width:40px;height:14px;line-height:14px;text-align:right;letter-spacing:-0.3px;">10</div><div class="t" style="left:298.5px;top:581px;font-size:9.5px;color:#000;width:40px;height:14px;line-height:14px;text-align:right;letter-spacing:-0.3px;">0</div><div class="t" style="left:298.5px;top:603px;font-size:9.5px;color:#000;width:40px;height:14px;line-height:14px;text-align:right;letter-spacing:-0.3px;">-10</div><div class="t" style="left:298.5px;top:626px;font-size:9.5px;color:#000;width:40px;height:14px;line-height:14px;text-align:right;letter-spacing:-0.3px;">-20</div><div class="t" style="left:321.5px;top:639px;font-size:9.5px;color:#000;width:60px;height:14px;line-height:14px;text-align:center;letter-spacing:-0.3px;">10</div><div class="t" style="left:518.5px;top:639px;font-size:9.5px;color:#000;width:60px;height:14px;line-height:14px;text-align:center;letter-spacing:-0.3px;">100</div><div class="t" style="left:713.5px;top:639px;font-size:9.5px;color:#000;width:60px;height:14px;line-height:14px;text-align:center;letter-spacing:-0.3px;">1000</div><div class="t" style="left:909.5px;top:639px;font-size:9.5px;color:#000;width:60px;height:14px;line-height:14px;text-align:center;letter-spacing:-0.3px;">10000</div><div class="t" style="left:1105.5px;top:639px;font-size:9.5px;color:#000;width:60px;height:14px;line-height:14px;text-align:center;letter-spacing:-0.3px;">100000</div><div class="t" style="left:308px;top:516px;font-size:10px;color:#000;height:14px;line-height:14px;transform:rotate(-90deg);">dB</div><div class="t" style="left:736px;top:653px;font-size:10px;color:#000;height:14px;line-height:14px;">Hz</div><div class="t" style="left:1156px;top:416px;font-size:10px;color:#000;height:14px;line-height:14px;">0/1</div><div class="t" style="left:1156px;top:436px;font-size:10px;color:#000;height:14px;line-height:14px;">0/2</div><svg style="position:absolute;left:0;top:0" width="1543" height="865"><rect x="354" y="716" width="782" height="1" fill="#c6c6ee"/><rect x="354" y="787" width="782" height="1" fill="#c6c6ee"/><rect x="372" y="710" width="1" height="84" fill="#c6c6ee"/><rect x="390" y="710" width="1" height="84" fill="#c6c6ee"/><rect x="407" y="710" width="1" height="84" fill="#c6c6ee"/><rect x="425" y="710" width="1" height="84" fill="#c6c6ee"/><rect x="443" y="710" width="1" height="84" fill="#c6c6ee"/><rect x="461" y="710" width="1" height="84" fill="#c6c6ee"/><rect x="478" y="710" width="1" height="84" fill="#c6c6ee"/><rect x="496" y="710" width="1" height="84" fill="#c6c6ee"/><rect x="514" y="710" width="1" height="84" fill="#c6c6ee"/><rect x="532" y="710" width="1" height="84" fill="#c6c6ee"/><rect x="549" y="710" width="1" height="84" fill="#c6c6ee"/><rect x="567" y="710" width="1" height="84" fill="#c6c6ee"/><rect x="585" y="710" width="1" height="84" fill="#c6c6ee"/><rect x="603" y="710" width="1" height="84" fill="#c6c6ee"/><rect x="620" y="710" width="1" height="84" fill="#c6c6ee"/><rect x="638" y="710" width="1" height="84" fill="#c6c6ee"/><rect x="656" y="710" width="1" height="84" fill="#c6c6ee"/><rect x="674" y="710" width="1" height="84" fill="#c6c6ee"/><rect x="691" y="710" width="1" height="84" fill="#c6c6ee"/><rect x="709" y="710" width="1" height="84" fill="#c6c6ee"/><rect x="727" y="710" width="1" height="84" fill="#c6c6ee"/><rect x="745" y="710" width="1" height="84" fill="#c6c6ee"/><rect x="762" y="710" width="1" height="84" fill="#c6c6ee"/><rect x="780" y="710" width="1" height="84" fill="#c6c6ee"/><rect x="798" y="710" width="1" height="84" fill="#c6c6ee"/><rect x="816" y="710" width="1" height="84" fill="#c6c6ee"/><rect x="833" y="710" width="1" height="84" fill="#c6c6ee"/><rect x="851" y="710" width="1" height="84" fill="#c6c6ee"/><rect x="869" y="710" width="1" height="84" fill="#c6c6ee"/><rect x="887" y="710" width="1" height="84" fill="#c6c6ee"/><rect x="904" y="710" width="1" height="84" fill="#c6c6ee"/><rect x="922" y="710" width="1" height="84" fill="#c6c6ee"/><rect x="940" y="710" width="1" height="84" fill="#c6c6ee"/><rect x="958" y="710" width="1" height="84" fill="#c6c6ee"/><rect x="975" y="710" width="1" height="84" fill="#c6c6ee"/><rect x="993" y="710" width="1" height="84" fill="#c6c6ee"/><rect x="1011" y="710" width="1" height="84" fill="#c6c6ee"/><rect x="1029" y="710" width="1" height="84" fill="#c6c6ee"/><rect x="1046" y="710" width="1" height="84" fill="#c6c6ee"/><rect x="1064" y="710" width="1" height="84" fill="#c6c6ee"/><rect x="1082" y="710" width="1" height="84" fill="#c6c6ee"/><rect x="1100" y="710" width="1" height="84" fill="#c6c6ee"/><rect x="1117" y="710" width="1" height="84" fill="#c6c6ee"/><path d="M355 730.2V775.2M356 733.1V781.7M357 736.1V781.5M358 730.6V769.8M359 729.1V771.6M360 734.6V770.3M361 732.6V769.5M362 729.7V770.7M363 732.9V769.1M364 734.5V781.3M365 736.5V772.1M366 735.9V771.8M367 734.6V770.8M368 725.2V768.9M369 735.8V772.7M370 725.2V770.1M371 733.2V783.0M372 728.4V770.9M373 732.9V782.0M374 731.3V782.8M375 732.9V771.9M376 734.5V771.5M377 735.4V770.5M378 734.2V776.3M379 728.0V769.1M380 734.1V773.1M381 733.9V774.9M382 734.0V775.0M383 736.1V770.8M384 735.4V769.1M385 736.6V780.1M386 726.5V770.1M387 731.5V774.7M388 734.8V769.1M389 730.5V782.1M390 733.4V778.2M391 724.0V774.9M392 733.5V773.5M393 726.6V770.6M394 729.0V775.1M395 733.2V780.1M396 722.8V772.3M397 732.0V771.9M398 726.5V777.5M399 729.4V780.3M400 731.6V770.5M401 735.0V772.4M402 733.5V770.7M403 729.1V787.5M404 735.5V770.7M405 729.2V769.7M406 732.9V771.6M407 727.3V775.3M408 730.5V770.9M409 724.1V773.7M410 729.7V770.6M411 734.8V771.8M412 734.7V783.5M413 729.3V776.8M414 731.4V773.1M415 729.6V778.4M416 734.5V775.5M417 724.8V769.3M418 729.9V770.2M419 726.8V770.0M420 731.4V769.9M421 733.6V771.2M422 723.6V781.7M423 728.2V771.4M424 730.9V769.3M425 732.3V771.8M426 733.9V781.0M427 729.5V777.3M428 734.8V778.4M429 731.1V778.0M430 730.1V776.4M431 734.9V776.1M432 735.1V778.5M433 732.3V783.3M434 731.5V775.8M435 728.7V770.0M436 736.1V778.4M437 725.4V772.0M438 729.7V778.0M439 731.2V776.5M440 735.3V780.7M441 729.3V778.8M442 729.8V776.2M443 721.2V771.8M444 728.8V770.4M445 730.3V779.4M446 729.7V772.2M447 732.6V778.5M448 735.6V773.2M449 734.5V777.4M450 732.8V775.0M451 728.6V776.9M452 729.7V776.9M453 732.5V770.2M454 727.8V772.8M455 734.2V778.6M456 734.8V770.9M457 731.7V770.4M458 732.9V770.7M459 734.4V773.2M460 735.4V771.2M461 730.1V771.0M462 729.7V774.9M463 734.9V782.8M464 729.7V769.7M465 734.8V775.9M466 727.3V777.3M467 734.7V770.9M468 733.8V771.5M469 730.5V771.3M470 722.4V777.2M471 733.2V775.6M472 732.5V777.9M473 733.5V772.3M474 729.3V774.3M475 720.3V774.1M476 731.4V773.4M477 735.6V770.0M478 729.6V774.8M479 733.2V772.1M480 726.9V779.2M481 731.1V774.5M482 735.0V774.9M483 729.8V770.9M484 722.5V773.2M485 731.8V772.6M486 728.5V770.8M487 731.0V772.7M488 728.5V770.6M489 734.1V776.8M490 729.5V775.9M491 730.8V771.8M492 733.3V781.3M493 728.0V770.6M494 733.5V784.3M495 734.7V774.6M496 735.2V773.6M497 730.4V770.4M498 730.1V774.4M499 730.4V776.7M500 735.4V773.2M501 735.2V775.3M502 730.1V771.3M503 733.3V777.4M504 729.8V771.4M505 735.3V778.4M506 730.9V771.2M507 722.2V773.9M508 729.5V775.2M509 724.7V771.1M510 728.1V773.7M511 733.2V778.7M512 721.8V771.7M513 730.8V774.3M514 733.0V773.5M515 732.0V781.5M516 724.5V775.0M517 733.1V776.5M518 732.9V780.9M519 732.4V772.1M520 727.5V771.3M521 729.7V770.3M522 730.6V777.1M523 734.5V772.5M524 733.9V781.8M525 732.9V779.3M526 725.4V771.9M527 713.0V773.3M528 734.7V772.2M529 732.9V774.0M530 725.8V782.7M531 734.1V774.1M532 730.6V785.4M533 728.6V779.1M534 730.1V774.2M535 731.7V773.9M536 727.4V777.3M537 730.1V774.4M538 721.0V779.4M539 728.6V777.0M540 725.0V777.4M541 723.0V780.7M542 722.6V778.9M543 717.0V781.0M544 721.6V787.1M545 710.5V778.5M546 715.5V782.7M547 725.9V790.9M548 725.8V793.5M549 720.2V781.1M550 723.7V791.2M551 723.3V788.8M552 710.5V793.5M553 710.5V793.5M554 739.2V765.6M555 740.0V764.7M556 740.8V764.5M557 742.3V764.9M558 742.5V760.6M559 744.8V760.0M560 743.8V760.0M561 746.4V759.6M562 744.9V758.8M563 747.0V758.7M564 746.9V758.4M565 748.0V758.2M566 747.8V757.4M567 748.3V756.9M568 748.2V757.5M569 748.7V757.0M570 748.7V756.7M571 748.6V756.3M572 749.6V756.2M573 749.7V755.4M574 750.0V755.2M575 749.8V755.3M576 750.3V754.8M577 749.3V754.9M578 750.1V755.0M579 750.3V754.6M580 750.5V754.7M581 750.4V754.7M582 750.6V754.5M583 750.8V754.6M584 750.7V754.5M585 750.9V754.5M586 750.2V754.2M587 750.6V754.5M588 751.0V754.3M589 750.5V753.9M590 751.0V754.0M591 751.2V754.1M592 751.3V753.9M593 751.3V753.8M594 751.3V753.8M595 750.7V754.2M596 751.2V753.9M597 751.1V753.8M598 751.3V754.2M599 751.2V753.9M600 751.0V754.3M601 751.1V754.0M602 751.3V753.7M603 750.9V753.9M604 751.3V753.8M605 750.5V754.0M606 751.1V753.8M607 751.2V753.8M608 751.1V753.9M609 751.2V753.8M610 751.3V753.8M611 751.2V753.8M612 751.3V754.0M613 751.3V753.8M614 750.6V753.9M615 751.2V754.0M616 751.0V753.9M617 751.1V753.9M618 751.1V754.0M619 751.0V753.9M620 751.2V753.9M621 751.0V753.8M622 751.0V753.8M623 751.0V754.0M624 751.2V754.4M625 751.2V754.0M626 751.2V753.9M627 751.1V753.9M628 750.9V754.0M629 751.2V754.0M630 751.2V753.8M631 751.3V753.9M632 751.0V753.9M633 751.3V753.8M634 746.1V759.6M635 745.7V760.5M636 745.5V759.8M637 744.7V760.1M638 745.8V761.6M639 743.9V761.0M640 745.6V761.8M641 742.7V760.9M642 743.2V763.3M643 745.1V762.6M644 745.0V763.2M645 744.6V760.7M646 744.8V760.1M647 745.9V761.6M648 746.3V759.4M649 746.7V760.2M650 746.8V758.1M651 746.8V758.5M652 746.3V759.3M653 744.3V760.9M654 740.7V763.2M655 740.7V765.0M656 737.7V765.4M657 744.6V761.6M658 746.3V758.4M659 746.3V760.2M660 743.7V760.2M661 744.7V760.6M662 743.6V761.1M663 743.4V761.0M664 744.6V764.6M665 740.2V761.4M666 744.1V761.1M667 744.0V762.5M668 739.6V762.5M669 742.0V761.5M670 740.3V761.5M671 743.7V761.5M672 744.9V761.5M673 743.9V760.6M674 745.7V760.9M675 745.4V760.2M676 743.6V759.2M677 745.6V760.1M678 746.5V758.6M679 745.7V760.2M680 745.1V759.6M681 743.3V761.5M682 743.9V761.2M683 743.9V762.7M684 742.4V765.1M685 741.1V764.4M686 743.3V762.2M687 739.9V761.6M688 742.5V764.5M689 743.2V762.6M690 741.9V765.2M691 737.5V763.2M692 734.4V768.8M693 739.9V769.5M694 741.8V766.5M695 738.4V762.7M696 741.6V764.2M697 742.9V763.8M698 744.2V761.8M699 743.4V761.5M700 742.7V761.5M701 745.8V760.6M702 745.8V759.0M703 747.5V758.2M704 748.3V758.5M705 747.3V756.6M706 749.3V756.5M707 749.9V756.0M708 749.9V755.7M709 750.0V755.1M710 749.8V754.8M711 750.6V754.5M712 750.5V754.5M713 750.4V754.9M714 750.6V754.3M715 750.9V754.1M716 750.9V754.4M717 751.0V754.3M718 750.9V754.2M719 751.0V754.3M720 750.5V754.5M721 750.8V754.4M722 751.1V754.2M723 750.7V754.2M724 750.8V754.6M725 751.0V754.3M726 750.7V754.2M727 750.9V754.1M728 751.0V754.4M729 750.9V754.0M730 750.9V754.0M731 750.7V754.1M732 751.0V754.2M733 750.7V754.2M734 750.9V754.5M735 750.8V754.1M736 750.7V754.7M737 750.9V754.5M738 750.7V754.5M739 751.1V754.4M740 750.9V754.2M741 751.0V754.1M742 751.1V754.0M743 750.9V754.3M744 750.7V754.3M745 751.1V754.5M746 751.0V754.4M747 750.4V754.3M748 750.6V754.5M749 751.1V754.0M750 751.0V754.0M751 750.9V754.1M752 751.0V754.4M753 750.9V754.1M754 750.9V754.0M755 750.9V754.2M756 750.9V754.2M757 750.4V753.9M758 751.1V753.9M759 751.2V754.4M760 751.2V754.0M761 750.9V753.9M762 751.2V754.6M763 751.0V754.0M764 750.7V753.9M765 751.1V754.2M766 751.1V754.1M767 751.0V754.1M768 750.9V753.9M769 751.2V754.3M770 751.0V753.9M771 750.9V754.1M772 750.8V753.9M773 750.6V754.4M774 750.9V754.1M775 751.1V754.0M776 751.0V754.3M777 750.8V754.1M778 750.7V754.1M779 750.9V754.1M780 750.8V755.1M781 750.5V754.3M782 750.6V754.3M783 750.3V754.4M784 750.7V754.2M785 750.3V754.7M786 750.3V754.5M787 750.3V754.7M788 750.7V754.4M789 750.0V754.5M790 749.9V754.9M791 750.3V755.3M792 749.5V755.5M793 750.7V755.3M794 750.3V755.0M795 749.7V754.9M796 750.5V754.3M797 750.5V754.5M798 750.4V754.4M799 750.7V754.5M800 750.6V754.7M801 750.5V754.5M802 750.1V754.8M803 750.8V754.3M804 750.4V755.2M805 750.7V754.4M806 750.8V755.1M807 750.8V754.3M808 750.7V754.6M809 750.8V754.8M810 750.4V754.7M811 750.6V754.6M812 750.3V754.3M813 750.8V754.2M814 750.7V754.4M815 750.7V754.4M816 750.1V754.6M817 751.0V754.6M818 750.9V754.6M819 751.0V754.3M820 750.4V754.1M821 750.4V754.1M822 750.7V754.3M823 750.6V754.4M824 750.7V754.2M825 750.7V754.1M826 751.0V754.1M827 751.0V754.3M828 750.7V754.6M829 750.8V754.3M830 751.0V754.7M831 750.2V754.2M832 751.1V754.1M833 751.1V754.0M834 750.7V754.0M835 750.9V753.9M836 751.0V754.0M837 750.7V754.0M838 751.1V754.0M839 750.9V753.8M840 751.2V754.1M841 751.2V753.8M842 751.2V753.9M843 751.1V753.8M844 751.3V754.2M845 751.3V753.9M846 751.2V754.0M847 751.1V753.9M848 751.4V753.9M849 751.2V753.9M850 751.3V753.7M851 751.4V753.7M852 751.4V754.0M853 751.3V753.6M854 751.3V753.9M855 751.4V753.7M856 751.3V753.7M857 751.4V754.0M858 751.3V753.8M859 751.3V753.7M860 751.1V753.8M861 751.3V753.7M862 751.0V753.7M863 751.1V753.9M864 751.1V753.8M865 751.3V753.8M866 751.4V753.8M867 751.4V753.7M868 751.4V754.0M869 751.2V753.8M870 751.3V753.8M871 751.4V754.3M872 751.4V753.7M873 751.4V753.7M874 751.1V753.8M875 751.3V753.8M876 751.2V753.9M877 751.3V753.9M878 750.9V753.9M879 751.3V753.8M880 751.1V753.7M881 751.1V753.8M882 751.3V753.9M883 751.3V754.1M884 751.4V753.8M885 751.4V753.9M886 751.3V753.8M887 751.2V753.9M888 751.3V753.7M889 751.4V753.9M890 751.1V753.9M891 751.2V753.9M892 750.7V753.9M893 751.1V753.9M894 750.7V754.6M895 749.7V755.2M896 749.3V755.8M897 748.7V757.2M898 748.7V756.5M899 748.8V756.7M900 747.7V756.6M901 748.3V756.7M902 748.5V756.5M903 749.2V756.1M904 748.7V756.1M905 748.6V756.4M906 747.8V756.5M907 749.2V755.7M908 749.6V755.9M909 749.5V755.5M910 749.0V755.4M911 749.5V755.4M912 748.5V755.6M913 749.8V755.2M914 749.0V755.0M915 749.8V755.3M916 750.0V754.9M917 750.3V755.2M918 750.5V754.6M919 750.2V754.6M920 750.0V754.6M921 750.5V754.3M922 750.9V754.6M923 751.2V754.3M924 751.3V754.2M925 751.3V753.8M926 751.3V754.1M927 750.7V754.2M928 751.3V753.8M929 751.1V753.8M930 751.0V754.0M931 751.2V754.1M932 751.1V753.9M933 751.4V754.0M934 750.9V753.9M935 751.0V754.1M936 751.1V754.1M937 751.1V754.0M938 750.9V754.2M939 751.3V754.0M940 751.2V753.9M941 751.0V753.9M942 751.1V753.8M943 751.0V754.2M944 751.3V753.8M945 751.0V753.9M946 751.0V754.2M947 750.7V754.1M948 751.1V754.1M949 751.2V754.2M950 751.1V754.3M951 751.2V754.0M952 751.2V753.9M953 751.1V754.4M954 751.2V754.0M955 750.8V754.0M956 751.0V754.0M957 750.6V754.0M958 751.1V754.5M959 751.0V754.2M960 751.0V754.1M961 751.1V754.0M962 750.9V754.3M963 751.1V754.3M964 750.9V754.1M965 751.1V754.3M966 750.6V754.3M967 750.6V754.1M968 750.9V754.1M969 751.0V754.2M970 751.0V754.0M971 751.1V754.2M972 750.7V754.1M973 750.9V754.4M974 750.8V754.2M975 750.5V755.0M976 750.0V755.1M977 749.8V755.2M978 749.8V755.4M979 748.9V755.1M980 749.6V755.2M981 749.5V755.4M982 749.5V755.5M983 749.7V755.3M984 749.4V755.1M985 749.8V756.0M986 749.8V755.3M987 748.9V755.4M988 750.0V755.4M989 749.6V755.4M990 750.0V755.1M991 749.2V755.3M992 749.8V756.0M993 749.8V755.8M994 749.3V755.8M995 750.1V755.5M996 749.8V755.6M997 749.6V755.5M998 749.9V755.0M999 750.1V755.2M1000 749.9V755.7M1001 750.1V755.4M1002 750.0V755.2M1003 749.7V755.2M1004 750.2V755.0M1005 750.4V754.8M1006 750.1V755.2M1007 750.4V754.8M1008 749.2V755.1M1009 750.2V755.1M1010 750.3V754.8M1011 750.4V754.7M1012 749.8V754.9M1013 750.5V755.2M1014 750.3V755.1M1015 749.9V754.9M1016 750.3V754.6M1017 750.1V754.8M1018 750.4V754.8M1019 750.4V755.3M1020 750.1V754.7M1021 750.5V755.1M1022 750.5V754.5M1023 750.7V754.8M1024 750.4V755.1M1025 750.7V754.7M1026 750.7V754.5M1027 750.7V754.3M1028 750.3V754.9M1029 750.8V754.3M1030 750.5V754.2M1031 750.7V754.2M1032 750.9V754.5M1033 750.5V754.3M1034 751.0V754.4M1035 750.8V754.2M1036 750.8V754.1M1037 750.8V754.2M1038 751.0V754.0M1039 751.0V754.1M1040 751.0V754.2M1041 750.7V754.3M1042 751.0V754.3M1043 750.6V754.0M1044 751.1V753.9M1045 751.2V754.0M1046 751.2V754.1M1047 751.2V754.0M1048 751.2V754.0M1049 751.0V753.8M1050 751.2V753.8M1051 750.4V754.6M1052 748.5V755.9M1053 747.4V758.5M1054 744.0V761.0M1055 745.4V760.6M1056 746.6V759.1M1057 745.4V759.6M1058 751.0V754.0M1059 750.7V754.2M1060 751.0V754.4M1061 746.8V757.5M1062 746.7V758.9M1063 746.1V760.3M1064 745.4V760.4M1065 745.5V759.6M1066 747.1V758.8M1067 747.3V758.6M1068 750.6V754.4M1069 750.8V754.3M1070 750.4V754.2M1071 750.6V754.3M1072 751.0V753.9M1073 748.0V759.0M1074 746.6V758.0M1075 746.5V759.4M1076 745.3V759.3M1077 747.0V760.0M1078 746.0V758.4M1079 747.1V757.5M1080 750.6V754.1M1081 751.0V754.1M1082 750.7V753.9M1083 750.4V753.9M1084 751.1V754.2M1085 744.0V762.2M1086 741.8V765.2M1087 740.5V762.3M1088 742.5V766.4M1089 741.0V762.7M1090 737.8V762.2M1091 743.2V765.0M1092 742.5V761.6M1093 741.2V767.9M1094 746.2V759.7M1095 749.5V755.5M1096 751.9V753.0M1097 751.9V753.1M1098 752.0V753.1M1099 752.0V753.1M1100 752.0V753.0M1101 752.0V753.1M1102 752.0V753.0M1103 751.9V753.1M1104 752.0V753.2M1105 751.9V753.0M1106 751.9V753.1M1107 752.0V753.0M1108 752.0V753.1M1109 752.0V753.0M1110 752.0V753.1M1111 751.9V753.0M1112 752.0V753.1M1113 752.0V753.0M1114 752.0V753.0M1115 751.9V753.1M1116 752.0V753.1M1117 752.0V753.0M1118 752.0V753.0M1119 752.0V753.0M1120 752.0V753.0M1121 752.0V753.1M1122 752.0V753.1M1123 752.0V753.2M1124 751.9V753.1M1125 752.0V753.1M1126 751.8V753.0M1127 751.9V753.1M1128 752.0V753.0M1129 751.9V753.0M1130 751.9V753.1M1131 752.0V753.1M1132 751.8V753.0M1133 752.0V753.1M1134 751.9V753.1M1135 752.0V753.1" stroke="#08519b" stroke-width="1.5" fill="none"/><rect x="353.5" y="709.5" width="783" height="85" fill="none" stroke="#a0a0a0"/><rect x="375.3" y="710" width="2.6" height="84" fill="#a6d602"/><circle cx="376.6" cy="736.2" r="2.6" fill="#a6d602"/><rect x="456.3" y="710" width="2.6" height="84" fill="#f07272"/><circle cx="457.6" cy="768" r="2.6" fill="#f07272"/></svg><div class="t" style="left:300px;top:704px;font-size:9.5px;color:#000;width:49.5px;height:14px;line-height:14px;text-align:right;letter-spacing:-0.3px;">2.33</div><div class="t" style="left:300px;top:746px;font-size:9.5px;color:#000;width:49.5px;height:14px;line-height:14px;text-align:right;letter-spacing:-0.3px;">0</div><div class="t" style="left:300px;top:787px;font-size:9.5px;color:#000;width:49.5px;height:14px;line-height:14px;text-align:right;letter-spacing:-0.3px;">-2.33</div><div class="t" style="left:312px;top:746px;font-size:10px;color:#000;height:14px;line-height:14px;transform:rotate(-90deg);">Pa</div><div class="t" style="left:333.6px;top:801px;font-size:9.5px;color:#000;width:40px;height:14px;line-height:14px;text-align:center;letter-spacing:-0.3px;">0</div><div class="t" style="left:351.3525px;top:801px;font-size:9.5px;color:#000;width:40px;height:14px;line-height:14px;text-align:center;letter-spacing:-0.3px;">0.25</div><div class="t" style="left:369.105px;top:801px;font-size:9.5px;color:#000;width:40px;height:14px;line-height:14px;text-align:center;letter-spacing:-0.3px;">0.5</div><div class="t" style="left:386.8575px;top:801px;font-size:9.5px;color:#000;width:40px;height:14px;line-height:14px;text-align:center;letter-spacing:-0.3px;">0.75</div><div class="t" style="left:404.61px;top:801px;font-size:9.5px;color:#000;width:40px;height:14px;line-height:14px;text-align:center;letter-spacing:-0.3px;">1</div><div class="t" style="left:422.3625px;top:801px;font-size:9.5px;color:#000;width:40px;height:14px;line-height:14px;text-align:center;letter-spacing:-0.3px;">1.25</div><div class="t" style="left:440.115px;top:801px;font-size:9.5px;color:#000;width:40px;height:14px;line-height:14px;text-align:center;letter-spacing:-0.3px;">1.5</div><div class="t" style="left:457.86750000000006px;top:801px;font-size:9.5px;color:#000;width:40px;height:14px;line-height:14px;text-align:center;letter-spacing:-0.3px;">1.75</div><div class="t" style="left:475.62px;top:801px;font-size:9.5px;color:#000;width:40px;height:14px;line-height:14px;text-align:center;letter-spacing:-0.3px;">2</div><div class="t" style="left:493.37250000000006px;top:801px;font-size:9.5px;color:#000;width:40px;height:14px;line-height:14px;text-align:center;letter-spacing:-0.3px;">2.25</div><div class="t" style="left:511.125px;top:801px;font-size:9.5px;color:#000;width:40px;height:14px;line-height:14px;text-align:center;letter-spacing:-0.3px;">2.5</div><div class="t" style="left:528.8775px;top:801px;font-size:9.5px;color:#000;width:40px;height:14px;line-height:14px;text-align:center;letter-spacing:-0.3px;">2.75</div><div class="t" style="left:546.6300000000001px;top:801px;font-size:9.5px;color:#000;width:40px;height:14px;line-height:14px;text-align:center;letter-spacing:-0.3px;">3</div><div class="t" style="left:564.3825px;top:801px;font-size:9.5px;color:#000;width:40px;height:14px;line-height:14px;text-align:center;letter-spacing:-0.3px;">3.25</div><div class="t" style="left:582.135px;top:801px;font-size:9.5px;color:#000;width:40px;height:14px;line-height:14px;text-align:center;letter-spacing:-0.3px;">3.5</div><div class="t" style="left:599.8875px;top:801px;font-size:9.5px;color:#000;width:40px;height:14px;line-height:14px;text-align:center;letter-spacing:-0.3px;">3.75</div><div class="t" style="left:617.6400000000001px;top:801px;font-size:9.5px;color:#000;width:40px;height:14px;line-height:14px;text-align:center;letter-spacing:-0.3px;">4</div><div class="t" style="left:635.3925px;top:801px;font-size:9.5px;color:#000;width:40px;height:14px;line-height:14px;text-align:center;letter-spacing:-0.3px;">4.25</div><div class="t" style="left:653.145px;top:801px;font-size:9.5px;color:#000;width:40px;height:14px;line-height:14px;text-align:center;letter-spacing:-0.3px;">4.5</div><div class="t" style="left:670.8975px;top:801px;font-size:9.5px;color:#000;width:40px;height:14px;line-height:14px;text-align:center;letter-spacing:-0.3px;">4.75</div><div class="t" style="left:688.6500000000001px;top:801px;font-size:9.5px;color:#000;width:40px;height:14px;line-height:14px;text-align:center;letter-spacing:-0.3px;">5</div><div class="t" style="left:706.4025px;top:801px;font-size:9.5px;color:#000;width:40px;height:14px;line-height:14px;text-align:center;letter-spacing:-0.3px;">5.25</div><div class="t" style="left:724.155px;top:801px;font-size:9.5px;color:#000;width:40px;height:14px;line-height:14px;text-align:center;letter-spacing:-0.3px;">5.5</div><div class="t" style="left:741.9075px;top:801px;font-size:9.5px;color:#000;width:40px;height:14px;line-height:14px;text-align:center;letter-spacing:-0.3px;">5.75</div><div class="t" style="left:759.6600000000001px;top:801px;font-size:9.5px;color:#000;width:40px;height:14px;line-height:14px;text-align:center;letter-spacing:-0.3px;">6</div><div class="t" style="left:777.4125000000001px;top:801px;font-size:9.5px;color:#000;width:40px;height:14px;line-height:14px;text-align:center;letter-spacing:-0.3px;">6.25</div><div class="t" style="left:795.1650000000001px;top:801px;font-size:9.5px;color:#000;width:40px;height:14px;line-height:14px;text-align:center;letter-spacing:-0.3px;">6.5</div><div class="t" style="left:812.9175px;top:801px;font-size:9.5px;color:#000;width:40px;height:14px;line-height:14px;text-align:center;letter-spacing:-0.3px;">6.75</div><div class="t" style="left:830.6700000000001px;top:801px;font-size:9.5px;color:#000;width:40px;height:14px;line-height:14px;text-align:center;letter-spacing:-0.3px;">7</div><div class="t" style="left:848.4225px;top:801px;font-size:9.5px;color:#000;width:40px;height:14px;line-height:14px;text-align:center;letter-spacing:-0.3px;">7.25</div><div class="t" style="left:866.1750000000001px;top:801px;font-size:9.5px;color:#000;width:40px;height:14px;line-height:14px;text-align:center;letter-spacing:-0.3px;">7.5</div><div class="t" style="left:883.9275px;top:801px;font-size:9.5px;color:#000;width:40px;height:14px;line-height:14px;text-align:center;letter-spacing:-0.3px;">7.75</div><div class="t" style="left:901.6800000000001px;top:801px;font-size:9.5px;color:#000;width:40px;height:14px;line-height:14px;text-align:center;letter-spacing:-0.3px;">8</div><div class="t" style="left:919.4325000000001px;top:801px;font-size:9.5px;color:#000;width:40px;height:14px;line-height:14px;text-align:center;letter-spacing:-0.3px;">8.25</div><div class="t" style="left:937.1850000000001px;top:801px;font-size:9.5px;color:#000;width:40px;height:14px;line-height:14px;text-align:center;letter-spacing:-0.3px;">8.5</div><div class="t" style="left:954.9375000000001px;top:801px;font-size:9.5px;color:#000;width:40px;height:14px;line-height:14px;text-align:center;letter-spacing:-0.3px;">8.75</div><div class="t" style="left:972.69px;top:801px;font-size:9.5px;color:#000;width:40px;height:14px;line-height:14px;text-align:center;letter-spacing:-0.3px;">9</div><div class="t" style="left:990.4425000000001px;top:801px;font-size:9.5px;color:#000;width:40px;height:14px;line-height:14px;text-align:center;letter-spacing:-0.3px;">9.25</div><div class="t" style="left:1008.1950000000002px;top:801px;font-size:9.5px;color:#000;width:40px;height:14px;line-height:14px;text-align:center;letter-spacing:-0.3px;">9.5</div><div class="t" style="left:1025.9475000000002px;top:801px;font-size:9.5px;color:#000;width:40px;height:14px;line-height:14px;text-align:center;letter-spacing:-0.3px;">9.75</div><div class="t" style="left:1043.7px;top:801px;font-size:9.5px;color:#000;width:40px;height:14px;line-height:14px;text-align:center;letter-spacing:-0.3px;">10</div><div class="t" style="left:1061.4525px;top:801px;font-size:9.5px;color:#000;width:40px;height:14px;line-height:14px;text-align:center;letter-spacing:-0.3px;">10.25</div><div class="t" style="left:1096.9575px;top:801px;font-size:9.5px;color:#000;width:40px;height:14px;line-height:14px;text-align:center;letter-spacing:-0.3px;">10.75</div><div class="t" style="left:1114.71px;top:801px;font-size:9.5px;color:#000;width:40px;height:14px;line-height:14px;text-align:center;letter-spacing:-0.3px;">11</div><div class="" style="left:1145px;top:710px;width:129px;height:23px;background:#fff;border:1px solid #acacb4;box-sizing:border-box;"></div><div class="" style="left:1255px;top:712px;width:17px;height:19px;background:#e1e1e1;border:1px solid #a2a2a2;box-sizing:border-box;"><svg width="17" height="19" style="position:absolute;left:0;top:0"><path d="M4 7.6 L8 11.5 L12 7.6" stroke="#262626" stroke-width="1.15" fill="none"/></svg></div><div class="t" style="left:1145px;top:710px;font-size:12px;color:#000;width:110px;height:23px;line-height:23px;text-align:center;">0/1</div><div class="" style="left:1145px;top:741px;width:129px;height:24px;background:linear-gradient(#f2f2f2,#e0e0e0);border:1px solid #a8a8a8;box-sizing:border-box;"></div><div class="t" style="left:1145px;top:741px;font-size:12px;color:#000;width:129px;height:24px;line-height:24px;text-align:center;">确定</div><div class="" style="left:1294px;top:699px;width:200px;height:120px;background:#fff;border:1px solid #a0a0a0;box-sizing:border-box;"></div><div class="t" style="left:1300px;top:700px;font-size:12px;color:#000;height:17px;line-height:17px;letter-spacing:0.2px;">采样率：&nbsp;&nbsp;44100</div><div class="" style="left:1295px;top:716px;width:198px;height:1px;background:#c8c8d0;"></div><div class="t" style="left:1300px;top:717px;font-size:12px;color:#000;height:17px;line-height:17px;letter-spacing:0.2px;">总采样数：485100</div><div class="" style="left:1295px;top:733px;width:198px;height:1px;background:#c8c8d0;"></div><div class="t" style="left:1300px;top:734px;font-size:12px;color:#000;height:17px;line-height:17px;letter-spacing:0.2px;">光标1(绿)：0.31044</div><div class="" style="left:1295px;top:750px;width:198px;height:1px;background:#c8c8d0;"></div><div class="t" style="left:1300px;top:751px;font-size:12px;color:#000;height:17px;line-height:17px;letter-spacing:0.2px;">光标2(红)：1.450549</div><div class="" style="left:1295px;top:767px;width:198px;height:1px;background:#c8c8d0;"></div><div class="t" style="left:1300px;top:768px;font-size:12px;color:#000;height:17px;line-height:17px;letter-spacing:0.2px;">选择区域时长：1.14011</div><div class="" style="left:1295px;top:784px;width:198px;height:1px;background:#c8c8d0;"></div><div class="t" style="left:1300px;top:785px;font-size:12px;color:#000;height:17px;line-height:17px;letter-spacing:0.2px;">区域内采样个数：50279</div><div class="" style="left:1295px;top:801px;width:198px;height:1px;background:#c8c8d0;"></div><div class="" style="left:1294px;top:119px;width:200px;height:533px;background:#fff;border:1px solid #a0a0a0;box-sizing:border-box;"></div><div class="" style="left:1295px;top:120px;width:181px;height:16px;background:#4482b8;"></div><div class="t" style="left:1299px;top:120px;font-size:12px;color:#fff;height:16px;line-height:16px;">s&nbsp;&nbsp;Pa</div><div class="" style="left:1295px;top:153px;width:181px;height:1px;background:#c8c8d0;"></div><div class="" style="left:1295px;top:170px;width:181px;height:1px;background:#c8c8d0;"></div><div class="" style="left:1295px;top:187px;width:181px;height:1px;background:#c8c8d0;"></div><div class="" style="left:1295px;top:204px;width:181px;height:1px;background:#c8c8d0;"></div><div class="" style="left:1295px;top:221px;width:181px;height:1px;background:#c8c8d0;"></div><div class="" style="left:1295px;top:238px;width:181px;height:1px;background:#c8c8d0;"></div><div class="" style="left:1295px;top:255px;width:181px;height:1px;background:#c8c8d0;"></div><div class="" style="left:1295px;top:272px;width:181px;height:1px;background:#c8c8d0;"></div><div class="" style="left:1295px;top:289px;width:181px;height:1px;background:#c8c8d0;"></div><div class="" style="left:1295px;top:306px;width:181px;height:1px;background:#c8c8d0;"></div><div class="" style="left:1295px;top:323px;width:181px;height:1px;background:#c8c8d0;"></div><div class="" style="left:1295px;top:340px;width:181px;height:1px;background:#c8c8d0;"></div><div class="" style="left:1295px;top:357px;width:181px;height:1px;background:#c8c8d0;"></div><div class="" style="left:1295px;top:374px;width:181px;height:1px;background:#c8c8d0;"></div><div class="" style="left:1295px;top:391px;width:181px;height:1px;background:#c8c8d0;"></div><div class="" style="left:1295px;top:408px;width:181px;height:1px;background:#c8c8d0;"></div><div class="" style="left:1295px;top:425px;width:181px;height:1px;background:#c8c8d0;"></div><div class="" style="left:1295px;top:442px;width:181px;height:1px;background:#c8c8d0;"></div><div class="" style="left:1295px;top:459px;width:181px;height:1px;background:#c8c8d0;"></div><div class="" style="left:1295px;top:476px;width:181px;height:1px;background:#c8c8d0;"></div><div class="" style="left:1295px;top:493px;width:181px;height:1px;background:#c8c8d0;"></div><div class="" style="left:1295px;top:510px;width:181px;height:1px;background:#c8c8d0;"></div><div class="" style="left:1295px;top:527px;width:181px;height:1px;background:#c8c8d0;"></div><div class="" style="left:1295px;top:544px;width:181px;height:1px;background:#c8c8d0;"></div><div class="" style="left:1295px;top:561px;width:181px;height:1px;background:#c8c8d0;"></div><div class="" style="left:1295px;top:578px;width:181px;height:1px;background:#c8c8d0;"></div><div class="" style="left:1295px;top:595px;width:181px;height:1px;background:#c8c8d0;"></div><div class="" style="left:1295px;top:612px;width:181px;height:1px;background:#c8c8d0;"></div><div class="" style="left:1295px;top:629px;width:181px;height:1px;background:#c8c8d0;"></div><div class="" style="left:1295px;top:646px;width:181px;height:1px;background:#c8c8d0;"></div><div class="" style="left:1295px;top:136px;width:181px;height:1px;background:#c8c8d0;"></div><div class="t" style="left:1299px;top:137px;font-size:12px;color:#000;height:16px;line-height:16px;letter-spacing:0.35px;">X:0.088254&nbsp;&nbsp;Y:0.172729</div><div class="t" style="left:1299px;top:154px;font-size:12px;color:#000;height:16px;line-height:16px;letter-spacing:0.35px;">X:0.088254&nbsp;&nbsp;Y:0.214233</div><div class="t" style="left:1299px;top:188px;font-size:12px;color:#000;height:16px;line-height:16px;letter-spacing:0.35px;">Hz&nbsp;&nbsp;dB</div><div class="t" style="left:1299px;top:205px;font-size:12px;color:#000;height:16px;line-height:16px;letter-spacing:0.35px;">X:&nbsp;&nbsp;&nbsp;&nbsp;16&nbsp;&nbsp;Y:0.039427</div><div class="t" style="left:1299px;top:222px;font-size:12px;color:#000;height:16px;line-height:16px;letter-spacing:0.35px;">X:&nbsp;&nbsp;&nbsp;&nbsp;16&nbsp;&nbsp;Y:-8.329305</div><div class="" style="left:1476px;top:120px;width:1px;height:531px;background:#f0f0f0;"></div><svg style="position:absolute;left:1477px;top:120px" width="16" height="531"><path d="M3 11 L7.5 6 L12 11 Z" fill="#dcdcdc"/><path d="M3 520 L7.5 525 L12 520 Z" fill="#dcdcdc"/></svg>
</body></html>
